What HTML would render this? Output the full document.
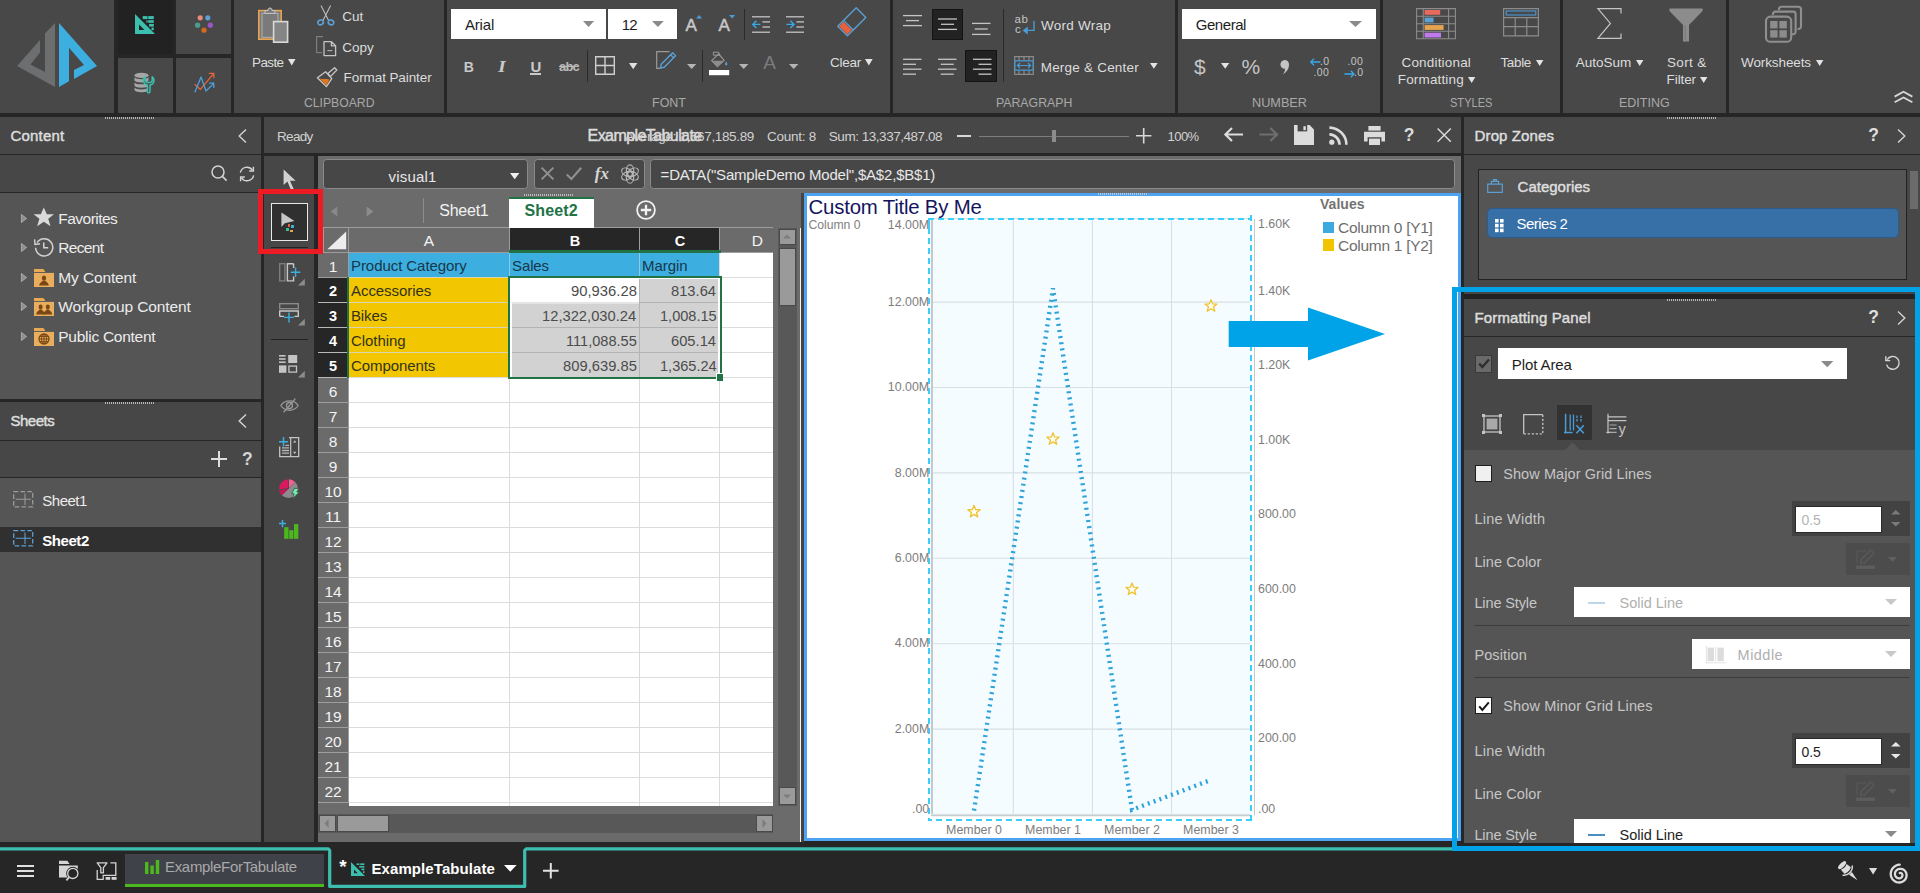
<!DOCTYPE html>
<html><head><meta charset="utf-8"><title>ExampleTabulate</title>
<style>
html,body{margin:0;padding:0;}
body{width:1920px;height:893px;overflow:hidden;background:#262626;font-family:"Liberation Sans",sans-serif;position:relative;}
.r{position:absolute;box-sizing:border-box;display:block;}
.t{position:absolute;white-space:nowrap;line-height:1;}
svg{overflow:visible;}
</style></head><body>

<!-- ribbon1 -->
<div class="r" style="left:0px;top:0px;width:114px;height:113px;background:#484848;"></div><div class="r" style="left:234px;top:0px;width:210px;height:113px;background:#484848;"></div><div class="r" style="left:447px;top:0px;width:443px;height:113px;background:#484848;"></div><div class="r" style="left:893px;top:0px;width:282px;height:113px;background:#484848;"></div><div class="r" style="left:1178px;top:0px;width:202px;height:113px;background:#484848;"></div><div class="r" style="left:1383px;top:0px;width:177px;height:113px;background:#484848;"></div><div class="r" style="left:1563px;top:0px;width:163px;height:113px;background:#484848;"></div><div class="r" style="left:1729px;top:0px;width:191px;height:113px;background:#484848;"></div><div class="r" style="left:118px;top:0px;width:55px;height:54px;background:#222222;"></div><div class="r" style="left:176px;top:0px;width:55px;height:54px;background:#484848;"></div><div class="r" style="left:118px;top:58px;width:55px;height:55px;background:#484848;"></div><div class="r" style="left:176px;top:58px;width:55px;height:55px;background:#484848;"></div><svg class="r" style="left:0px;top:0px;" width="114" height="113" viewBox="0 0 114 113"><path d="M17 66L40 40V52.5L30.5 64.5L45 72V33.5L55 23V87Z" fill="#6d6e70"/><path d="M59 23L97 66L74 79V70L84 65L69 47.7V81.3L59 87Z" fill="#3daee0"/></svg><svg class="r" style="left:135px;top:14px;" width="20" height="20" viewBox="0 0 20 20"><path d="M0 0L20 20H0Z M4 10.5V16H9.5Z" fill="#3cbfae" fill-rule="evenodd"/><g fill="#3cbfae"><rect x="7.700" y="2.100" width="4.800" height="3"/><rect x="13.200" y="2.100" width="5.600" height="3"/><rect x="11.400" y="6.200" width="1.100" height="2.600"/><rect x="13.200" y="6.200" width="5.600" height="2.600"/><rect x="14.100" y="9.900" width="4.700" height="2.700"/><rect x="16.500" y="13.600" width="2.300" height="2.600"/></g></svg><svg class="r" style="left:194px;top:14px;" width="20" height="20" viewBox="0 0 20 20"><circle cx="6.2" cy="3.8" r="2.6" fill="#e98a7a"/><circle cx="13.8" cy="3.8" r="2.6" fill="#5b9fd3"/><circle cx="3.6" cy="11.2" r="2.6" fill="#4a9d8c"/><circle cx="16.3" cy="11.2" r="2.6" fill="#9a55c9"/><circle cx="10" cy="16.2" r="2.6" fill="#d2691e"/></svg><svg class="r" style="left:134px;top:72px;" width="22" height="22" viewBox="0 0 22 22"><g fill="#a6a6a6"><ellipse cx="7.5" cy="3.4" rx="7" ry="2.6"/><path d="M.5 5.2c1 2.6 13 2.6 14 0V8.6c-1 2.6-13 2.6-14 0Z"/><path d="M.5 10.4c1 2.6 13 2.6 14 0V13.8c-1 2.6-13 2.6-14 0Z"/><path d="M.5 15.6c1 2.6 13 2.6 14 0V18c-1 3-13 3-14 0Z"/></g><path d="M11.2 4.8a4.6 4.6 0 0 0 2.2 8.2V19.6a1.3 1.3 0 0 0 2.6 0V13a4.6 4.6 0 0 0 2.2-8.2V9l-1.6 1.4h-3.8L11.200 9Z" fill="#484848" stroke="#3cbfae" stroke-width="1.5" stroke-linejoin="round"/></svg><svg class="r" style="left:194px;top:72px;" width="22" height="22" viewBox="0 0 22 22"><g fill="none" stroke-width="1.3" stroke-linejoin="round" stroke-linecap="round"><path d="M1 12.6L6.4 17.4L19.6 1.6M15.4 1.4H19.8V5.8" stroke="#e8643c"/><path d="M1 20L7 5L12 19L19.6 11.6M15.6 11.2H19.8V15.400" stroke="#4f9fd8"/></g></svg><svg class="r" style="left:258px;top:7px;" width="31" height="37" viewBox="0 0 31 37"><rect x=".8" y="3.6" width="22.4" height="28.6" fill="#7a7a7a" stroke="#e7a44f" stroke-width="1.6"/><rect x="4" y="6.4" width="16" height="24" fill="#7a7a7a" stroke="#a9a9a9" stroke-width="1.2"/><path d="M7 6.4V3.6H10V2.200Q12 -.6 14 2.200V3.6H17V6.400Z" fill="#7a7a7a" stroke="#c8c8c8" stroke-width="1"/><rect x="15.6" y="14.6" width="14" height="20.6" fill="#858585" stroke="#d9d9d9" stroke-width="1.6"/></svg><span class="t" style="letter-spacing:-0.606px;top:55.91px;font-size:13.5px;color:#dcdcdc;left:252px;">Paste</span><svg class="r" style="left:287.5px;top:59px;" width="7.5" height="6.5" viewBox="0 0 7.5 6.5"><path d="M0 0H7.5L3.75 6.5Z" fill="#e4e4e4"/></svg><svg class="r" style="left:317px;top:5px;" width="18" height="21" viewBox="0 0 18 21"><g fill="none" stroke="#bdbdbd" stroke-width="1.1"><path d="M4 .5L11.6 15.600M13.6 .500L6 15.600"/></g><g fill="none" stroke="#5b9fd3" stroke-width="1.6"><ellipse cx="3.6" cy="17.4" rx="2.8" ry="2.3" transform="rotate(-25 3.6 17.4)"/><ellipse cx="14" cy="17.400" rx="2.8" ry="2.3" transform="rotate(25 14 17.4)"/></g></svg><span class="t" style="letter-spacing:-0.005px;top:9.61px;font-size:13.5px;color:#dcdcdc;left:342.2px;">Cut</span><svg class="r" style="left:316px;top:36px;" width="21" height="21" viewBox="0 0 21 21"><path d="M7 .6H.6V16.600H6" fill="none" stroke="#7d7d7d" stroke-width="1.2"/><path d="M8 5.6H15.400L19.600 9.800V19.600H8Z M15.400 5.600V9.800H19.600" fill="#484848" stroke="#c4c4c4" stroke-width="1.3" stroke-linejoin="round"/><path d="M11.4 14.600H16.400" stroke="#b5b5b5" stroke-width="1.1"/></svg><span class="t" style="letter-spacing:-0.004px;top:40.61px;font-size:13.5px;color:#dcdcdc;left:342.2px;">Copy</span><svg class="r" style="left:316px;top:67px;" width="22" height="21" viewBox="0 0 22 21"><path d="M1.4 10.800L9.600 4.800L15.800 11.600L10.400 19.600Z" fill="none" stroke="#c8c8c8" stroke-width="1.3" stroke-linejoin="round"/><path d="M11.800 6.400L18.600 .800L20.800 3L14.400 9.600Z" fill="none" stroke="#c8c8c8" stroke-width="1.3" stroke-linejoin="round"/><path d="M3.600 11.600C7 12.400 10 11.800 13.400 12.600L10.300 18.400Z" fill="#e0781e"/></svg><span class="t" style="letter-spacing:-0.092px;top:71.41px;font-size:13.5px;color:#dcdcdc;left:343.6px;">Format Painter</span><span class="t" style="transform:scaleX(0.9382);transform-origin:0 50%;top:96.15px;font-size:13px;color:#a9a9a9;left:304px;">CLIPBOARD</span>
<!-- ribbon2 -->
<div class="r" style="left:451.4px;top:9.4px;width:154.8px;height:30px;background:#ffffff;"></div><div class="r" style="left:607.8px;top:9.4px;width:68.8px;height:30px;background:#ffffff;"></div><span class="t" style="letter-spacing:-0.163px;top:17.17px;font-size:15px;color:#1e1e1e;left:464.9px;">Arial</span><svg class="r" style="left:582.5px;top:21px;" width="11.100000000000023" height="6" viewBox="0 0 11.100000000000023 6"><path d="M0 0H11.100000000000023L5.550000000000011 6Z" fill="#8a8a8a"/></svg><span class="t" style="letter-spacing:-0.844px;top:17.17px;font-size:15px;color:#1e1e1e;left:621.7px;">12</span><svg class="r" style="left:652px;top:21px;" width="11.799999999999955" height="6" viewBox="0 0 11.799999999999955 6"><path d="M0 0H11.799999999999955L5.899999999999977 6Z" fill="#8a8a8a"/></svg><span class="t" style="top:59.76px;font-size:14px;color:#c9c9c9;left:463.8px;font-weight:bold;">B</span><span class="t" style="top:58.78px;font-size:16px;color:#c9c9c9;left:498px;font-weight:bold;font-style:italic;font-family:'Liberation Serif',serif;transform:scaleX(1.25);transform-origin:left;">I</span><span class="t" style="top:59.27px;font-size:15px;color:#c9c9c9;left:530.6px;font-weight:bold;">U</span><div class="r" style="left:530px;top:73px;width:11.4px;height:1.6px;background:#c9c9c9;"></div><span class="t" style="letter-spacing:-0.802px;top:59.85px;font-size:13px;color:#b9b9b9;left:559px;font-weight:bold;text-decoration:line-through;">abc</span><div class="r" style="left:587.2px;top:50px;width:1px;height:32px;background:#2a2a2a;"></div><svg class="r" style="left:594.6px;top:56px;" width="20" height="19" viewBox="0 0 20 19"><path d="M.7 .7H19.300V18.300H.700ZM10 .7V18.300M.7 9.5H19.300" fill="none" stroke="#cfcfcf" stroke-width="1.4"/></svg><svg class="r" style="left:628.8px;top:63px;" width="8.400000000000091" height="6.200000000000003" viewBox="0 0 8.400000000000091 6.200000000000003"><path d="M0 0H8.400000000000091L4.2000000000000455 6.200000000000003Z" fill="#e0e0e0"/></svg><svg class="r" style="left:656px;top:51px;" width="21" height="19" viewBox="0 0 21 19"><path d="M13.600 .700H.700V17.400H4" fill="none" stroke="#9a9a9a" stroke-width="1.2"/><path d="M16.600 1.800L19.600 4.800L8.200 16.200L4.400 17L5.200 13.200Z M14.600 3.800L17.600 6.800" fill="none" stroke="#5b9fd3" stroke-width="1.4" stroke-linejoin="round"/></svg><svg class="r" style="left:686.7px;top:64.2px;" width="9.299999999999955" height="5.0" viewBox="0 0 9.299999999999955 5.0"><path d="M0 0H9.299999999999955L4.649999999999977 5.0Z" fill="#b4b4b4"/></svg><div class="r" style="left:702px;top:50px;width:1px;height:32px;background:#2a2a2a;"></div><svg class="r" style="left:709px;top:51px;" width="21" height="25" viewBox="0 0 21 25"><path d="M4.400 1.200H9.600L11 4.200H4.400Z" fill="none" stroke="#9a9a9a" stroke-width="1"/><path d="M9.600 2.800L15.200 9.400L8.400 15.600L2.600 9.600Z" fill="none" stroke="#9a9a9a" stroke-width="1.1" stroke-linejoin="round"/><path d="M3.400 9.800H14.600L8.400 15.400Z" fill="#8d8d8d"/><path d="M17.200 10.600C18.800 12.800 18.800 14.400 17.200 14.600C15.600 14.400 15.600 12.800 17.200 10.600Z" fill="#5b9fd3"/><rect x="0" y="19" width="20.200" height="5.200" fill="#ffffff"/></svg><svg class="r" style="left:738.9px;top:64.2px;" width="9.399999999999977" height="5.0" viewBox="0 0 9.399999999999977 5.0"><path d="M0 0H9.399999999999977L4.699999999999989 5.0Z" fill="#b4b4b4"/></svg><span class="t" style="top:52.72px;font-size:19px;color:#7c7c7c;left:763.2px;">A</span><svg class="r" style="left:788.9px;top:64.2px;" width="9.399999999999977" height="5.0" viewBox="0 0 9.399999999999977 5.0"><path d="M0 0H9.399999999999977L4.699999999999989 5.0Z" fill="#b4b4b4"/></svg><span class="t" style="top:16.70px;font-size:17px;color:#c9c9c9;left:685.6px;-webkit-text-stroke:.5px #c9c9c9;">A</span><svg class="r" style="left:695.9px;top:15.2px;" width="6.2" height="3.6" viewBox="0 0 6.2 3.6"><path d="M0 3.600L3.100 0L6.200 3.600Z" fill="#4a9bd6"/></svg><span class="t" style="top:16.70px;font-size:17px;color:#c9c9c9;left:718.6px;-webkit-text-stroke:.5px #c9c9c9;">A</span><svg class="r" style="left:728.8px;top:15.2px;" width="6.2" height="3.6" viewBox="0 0 6.2 3.6"><path d="M0 0H6.200L3.100 3.600Z" fill="#4a9bd6"/></svg><div class="r" style="left:744.2px;top:9px;width:1px;height:31px;background:#2a2a2a;"></div><svg class="r" style="left:752px;top:15px;" width="19" height="19" viewBox="0 0 19 19"><rect x="0" y="1.15" width="18" height="1.3" fill="#c4c4c4"/><rect x="10.4" y="6.25" width="7.6" height="1.3" fill="#c4c4c4"/><rect x="10.4" y="11.35" width="7.6" height="1.3" fill="#c4c4c4"/><rect x="0" y="16.55" width="18" height="1.3" fill="#c4c4c4"/><path d="M8.400 9.400H.800M4.400 5.800L.800 9.400L4.400 13" fill="none" stroke="#38a9e8" stroke-width="1.4"/></svg><svg class="r" style="left:786px;top:15px;" width="19" height="19" viewBox="0 0 19 19"><rect x="0" y="1.15" width="18" height="1.3" fill="#c4c4c4"/><rect x="10.4" y="6.25" width="7.6" height="1.3" fill="#c4c4c4"/><rect x="10.4" y="11.35" width="7.6" height="1.3" fill="#c4c4c4"/><rect x="0" y="16.55" width="18" height="1.3" fill="#c4c4c4"/><path d="M.400 9.400H8M4.400 5.800L8 9.400L4.400 13" fill="none" stroke="#38a9e8" stroke-width="1.4"/></svg><svg class="r" style="left:837px;top:7px;" width="30" height="30" viewBox="0 0 30 30"><path d="M19.200 .800L28.800 10.400L10.400 28.800L.800 19.200Z" fill="none" stroke="#5b9fd3" stroke-width="1.4" stroke-linejoin="round"/><path d="M6.600 14.800L14.800 23L10.400 27.400L2.200 19.200Z" fill="#e8603c"/><path d="M6.600 13.400L16.200 23" stroke="#5b9fd3" stroke-width="1.3"/></svg><span class="t" style="letter-spacing:-0.253px;top:55.91px;font-size:13.5px;color:#dcdcdc;left:829.9px;">Clear</span><svg class="r" style="left:864.8px;top:59px;" width="7.7000000000000455" height="6.5" viewBox="0 0 7.7000000000000455 6.5"><path d="M0 0H7.7000000000000455L3.8500000000000227 6.5Z" fill="#e4e4e4"/></svg><span class="t" style="transform:scaleX(0.9607);transform-origin:0 50%;top:96.15px;font-size:13px;color:#a9a9a9;left:652px;">FONT</span><svg class="r" style="left:903.3px;top:0px;" width="19" height="27.6" viewBox="0 0 19 27.6"><rect x="0.0" y="14.95" width="19" height="1.3" fill="#c4c4c4"/><rect x="3.0" y="19.950000000000003" width="13" height="1.3" fill="#c4c4c4"/><rect x="0.0" y="24.950000000000003" width="19" height="1.3" fill="#c4c4c4"/></svg><div class="r" style="left:931.7px;top:9px;width:31.6px;height:31px;background:#222222;border:1px solid #141414;"></div><svg class="r" style="left:938.3px;top:0px;" width="19" height="31.4" viewBox="0 0 19 31.4"><rect x="0.0" y="18.35" width="19" height="1.3" fill="#c4c4c4"/><rect x="3.0" y="23.650000000000002" width="13" height="1.3" fill="#c4c4c4"/><rect x="0.0" y="28.75" width="19" height="1.3" fill="#c4c4c4"/></svg><svg class="r" style="left:971.7px;top:0px;" width="18.5" height="36.4" viewBox="0 0 18.5 36.4"><rect x="0.0" y="22.75" width="18.5" height="1.3" fill="#c4c4c4"/><rect x="2.75" y="28.35" width="13" height="1.3" fill="#c4c4c4"/><rect x="0.0" y="33.75" width="18.5" height="1.3" fill="#c4c4c4"/></svg><div class="r" style="left:1002.5px;top:9px;width:1px;height:73px;background:#2a2a2a;"></div><svg class="r" style="left:902.7px;top:0px;" width="18.5" height="76.2" viewBox="0 0 18.5 76.2"><rect x="0" y="58.65" width="18.5" height="1.3" fill="#c4c4c4"/><rect x="0" y="63.65" width="13" height="1.3" fill="#c4c4c4"/><rect x="0" y="68.55" width="18.5" height="1.3" fill="#c4c4c4"/><rect x="0" y="73.55" width="13" height="1.3" fill="#c4c4c4"/></svg><svg class="r" style="left:937.7px;top:0px;" width="18.5" height="76.2" viewBox="0 0 18.5 76.2"><rect x="0.0" y="58.65" width="18.5" height="1.3" fill="#c4c4c4"/><rect x="2.75" y="63.65" width="13" height="1.3" fill="#c4c4c4"/><rect x="0.0" y="68.55" width="18.5" height="1.3" fill="#c4c4c4"/><rect x="2.75" y="73.55" width="13" height="1.3" fill="#c4c4c4"/></svg><div class="r" style="left:965px;top:50px;width:31.6px;height:32px;background:#222222;border:1px solid #141414;"></div><svg class="r" style="left:972.7px;top:0px;" width="18.5" height="76.2" viewBox="0 0 18.5 76.2"><rect x="0.0" y="58.65" width="18.5" height="1.3" fill="#c4c4c4"/><rect x="5.5" y="63.65" width="13" height="1.3" fill="#c4c4c4"/><rect x="0.0" y="68.55" width="18.5" height="1.3" fill="#c4c4c4"/><rect x="5.5" y="73.55" width="13" height="1.3" fill="#c4c4c4"/></svg><span class="t" style="letter-spacing:0.602px;top:13.98px;font-size:11.5px;color:#c4c4c4;left:1014.6px;">ab</span><span class="t" style="top:24.38px;font-size:11.5px;color:#c4c4c4;left:1015px;">c</span><svg class="r" style="left:1022px;top:21px;" width="13" height="14" viewBox="0 0 13 14"><path d="M12 0V9.400H4" fill="none" stroke="#4a9bd6" stroke-width="1.400"/><path d="M5.800 5.400L.600 9.400L5.800 13.400Z" fill="#4a9bd6"/></svg><span class="t" style="letter-spacing:0.247px;top:19.41px;font-size:13.5px;color:#dcdcdc;left:1041px;">Word Wrap</span><svg class="r" style="left:1014.3px;top:56px;" width="20" height="19" viewBox="0 0 20 19"><path d="M.700 .700H19.300V18.300H.700ZM5 .700V4.800M10 .700V4.800M15 .700V4.800M5 14.200V18.300M10 14.200V18.300M15 14.200V18.300" fill="none" stroke="#8a8a8a" stroke-width="1.200"/><path d="M.700 4.800H19.300M.700 14.200H19.300M.700 4.800V14.200M19.300 4.800V14.200" fill="none" stroke="#4a9bd6" stroke-width="1.200"/><path d="M3.400 9.500H16.600M6 7L3.400 9.500L6 12M14 7L16.600 9.500L14 12" fill="none" stroke="#4a9bd6" stroke-width="1.200"/></svg><span class="t" style="letter-spacing:0.215px;top:60.71px;font-size:13.5px;color:#dcdcdc;left:1040.7px;">Merge &amp; Center</span><svg class="r" style="left:1150px;top:63.3px;" width="7.7000000000000455" height="5.700000000000003" viewBox="0 0 7.7000000000000455 5.700000000000003"><path d="M0 0H7.7000000000000455L3.8500000000000227 5.700000000000003Z" fill="#e4e4e4"/></svg><span class="t" style="transform:scaleX(0.9458);transform-origin:0 50%;top:96.15px;font-size:13px;color:#a9a9a9;left:996px;">PARAGRAPH</span>
<!-- ribbon3 -->
<div class="r" style="left:1182.4px;top:9.3px;width:193.2px;height:30px;background:#ffffff;"></div><span class="t" style="letter-spacing:-0.439px;top:17.17px;font-size:15px;color:#1e1e1e;left:1195.7px;">General</span><svg class="r" style="left:1349.3px;top:21px;" width="13.0" height="6" viewBox="0 0 13.0 6"><path d="M0 0H13.0L6.5 6Z" fill="#8a8a8a"/></svg><span class="t" style="top:56.14px;font-size:21px;color:#c4c4c4;left:1194px;">$</span><svg class="r" style="left:1220.7px;top:63.3px;" width="8.299999999999955" height="5.700000000000003" viewBox="0 0 8.299999999999955 5.700000000000003"><path d="M0 0H8.299999999999955L4.149999999999977 5.700000000000003Z" fill="#e4e4e4"/></svg><span class="t" style="letter-spacing:-0.087px;top:56.34px;font-size:21px;color:#c4c4c4;left:1241.4px;">%</span><svg class="r" style="left:1280px;top:60px;" width="10" height="15" viewBox="0 0 10 15"><path d="M4.600 0A4.400 4.400 0 0 1 9 4.600C9 9 6.400 12.600 2.600 14.400C4.400 12.400 5.200 10.600 5 8.800A4.400 4.400 0 0 1 4.600 0Z" fill="#c4c4c4"/></svg><span class="t" style="letter-spacing:0.417px;top:56.07px;font-size:10.5px;color:#c4c4c4;left:1320px;">.0</span><span class="t" style="letter-spacing:0.330px;top:67.47px;font-size:10.5px;color:#c4c4c4;left:1313.6px;">.00</span><svg class="r" style="left:1310px;top:58.4px;" width="11" height="8" viewBox="0 0 11 8"><path d="M10.400 4H1M4 .800L.800 4L4 7.200" fill="none" stroke="#38a9e8" stroke-width="1.3"/></svg><span class="t" style="letter-spacing:0.330px;top:56.07px;font-size:10.5px;color:#c4c4c4;left:1347.6px;">.00</span><span class="t" style="letter-spacing:0.417px;top:67.47px;font-size:10.5px;color:#c4c4c4;left:1354px;">.0</span><svg class="r" style="left:1344px;top:69.6px;" width="11" height="8" viewBox="0 0 11 8"><path d="M.400 4H9.800M6.800 .800L10 4L6.800 7.200" fill="none" stroke="#38a9e8" stroke-width="1.3"/></svg><span class="t" style="transform:scaleX(0.9762);transform-origin:0 50%;top:96.15px;font-size:13px;color:#a9a9a9;left:1251.7px;">NUMBER</span><svg class="r" style="left:1416px;top:7.6px;" width="40" height="31.4" viewBox="0 0 40 31.4"><path d="M.600 .600H39.400V30.800H.600ZM.600 8.200H39.400M.600 15.700H39.400M.600 23.300H39.400M7.200 .600V30.800M32.600 .600V30.800" fill="none" stroke="#8c8c8c" stroke-width="1.1"/><rect x="8.600" y="2" width="15.600" height="4.800" fill="#e8695e"/><rect x="8.600" y="9.600" width="9" height="4.800" fill="#5b9fd3"/><rect x="8.600" y="17.100" width="19" height="4.800" fill="#e7a44f"/><rect x="8.600" y="24.700" width="16.400" height="4.800" fill="#c07af0"/></svg><span class="t" style="letter-spacing:0.178px;top:55.91px;font-size:13.5px;color:#dcdcdc;left:1401.5px;">Conditional</span><span class="t" style="letter-spacing:0.147px;top:72.81px;font-size:13.5px;color:#dcdcdc;left:1397.8px;">Formatting</span><svg class="r" style="left:1468.3px;top:76.6px;" width="7.2999999999999545" height="6.0" viewBox="0 0 7.2999999999999545 6.0"><path d="M0 0H7.2999999999999545L3.6499999999999773 6.0Z" fill="#e4e4e4"/></svg><svg class="r" style="left:1503px;top:7.6px;" width="36" height="28.4" viewBox="0 0 36 28.4"><path d="M.600 .600H35.400V27.800H.600ZM.600 9.600H35.400M.600 18.700H35.400M12.200 9.600V27.800M23.800 9.600V27.800" fill="none" stroke="#8c8c8c" stroke-width="1.2"/><rect x="3.200" y="3" width="29.600" height="4" fill="none" stroke="#4a9bd6" stroke-width="1.100"/></svg><span class="t" style="letter-spacing:-0.336px;top:55.91px;font-size:13.5px;color:#dcdcdc;left:1500.4px;">Table</span><svg class="r" style="left:1535.6px;top:59.6px;" width="7.400000000000091" height="5.999999999999993" viewBox="0 0 7.400000000000091 5.999999999999993"><path d="M0 0H7.400000000000091L3.7000000000000455 5.999999999999993Z" fill="#e4e4e4"/></svg><span class="t" style="transform:scaleX(0.8504);transform-origin:0 50%;top:96.15px;font-size:13px;color:#a9a9a9;left:1450px;">STYLES</span><svg class="r" style="left:1597px;top:7.6px;" width="25" height="31" viewBox="0 0 25 31"><path d="M24 5.600V.600H.900L13.400 15.400L.900 30.400H24V25.400" fill="none" stroke="#c4c4c4" stroke-width="1.200"/></svg><span class="t" style="letter-spacing:0.010px;top:55.91px;font-size:13.5px;color:#dcdcdc;left:1575.7px;">AutoSum</span><svg class="r" style="left:1636px;top:59.6px;" width="7.400000000000091" height="5.999999999999993" viewBox="0 0 7.400000000000091 5.999999999999993"><path d="M0 0H7.400000000000091L3.7000000000000455 5.999999999999993Z" fill="#e4e4e4"/></svg><svg class="r" style="left:1669px;top:7.6px;" width="34" height="34" viewBox="0 0 34 34"><path d="M.400 .400H33.600V3L20 17V33.400H14V17L.400 3Z" fill="#8c8c8c"/><path d="M16.200 17V32" stroke="#777" stroke-width="1"/></svg><span class="t" style="letter-spacing:0.364px;top:55.91px;font-size:13.5px;color:#dcdcdc;left:1667px;">Sort &amp;</span><span class="t" style="letter-spacing:-0.100px;top:72.81px;font-size:13.5px;color:#dcdcdc;left:1666.6px;">Filter</span><svg class="r" style="left:1700px;top:76.6px;" width="7.400000000000091" height="6.0" viewBox="0 0 7.400000000000091 6.0"><path d="M0 0H7.400000000000091L3.7000000000000455 6.0Z" fill="#e4e4e4"/></svg><span class="t" style="transform:scaleX(0.9614);transform-origin:0 50%;top:96.15px;font-size:13px;color:#a9a9a9;left:1619.3px;">EDITING</span><svg class="r" style="left:1764.8px;top:6.3px;" width="37" height="37" viewBox="0 0 37 37"><g fill="none" stroke="#8f8f8f" stroke-width="2.100"><path d="M14 4V3A2.400 2.400 0 0 1 16.400 .800H33.600A2.400 2.400 0 0 1 36 3.200V20.600A2.400 2.400 0 0 1 33.600 23H32.600"/><path d="M8 9V8A2.400 2.400 0 0 1 10.400 5.600H28.200A2.400 2.400 0 0 1 30.600 8V25.800A2.400 2.400 0 0 1 28.200 28.200H27"/><rect x="1" y="10.600" width="25.200" height="25.200" rx="4.400"/></g><g fill="#8c8c8c"><rect x="5.200" y="15" width="7.400" height="7.400"/><rect x="14.400" y="15" width="7.400" height="7.400"/><rect x="5.200" y="24.200" width="7.400" height="7.400"/><rect x="14.400" y="24.200" width="7.400" height="7.400"/></g></svg><span class="t" style="letter-spacing:-0.103px;top:55.91px;font-size:13.5px;color:#dcdcdc;left:1741px;">Worksheets</span><svg class="r" style="left:1815.6px;top:59.6px;" width="7.400000000000091" height="5.999999999999993" viewBox="0 0 7.400000000000091 5.999999999999993"><path d="M0 0H7.400000000000091L3.7000000000000455 5.999999999999993Z" fill="#e4e4e4"/></svg><svg class="r" style="left:1894.4px;top:91px;" width="19" height="12" viewBox="0 0 19 12"><path d="M.600 5.600L9.500 .800L18.400 5.600M.600 11.200L9.500 6.400L18.400 11.200" fill="none" stroke="#d8d8d8" stroke-width="1.800"/></svg>
<!-- left -->
<div class="r" style="left:0px;top:117px;width:261px;height:37px;background:#474747;"></div><span class="t" style="letter-spacing:0.208px;top:127.67px;font-size:15px;color:#dedede;left:10.4px;-webkit-text-stroke:.45px;">Content</span><svg class="r" style="left:237.7px;top:129px;" width="9" height="14" viewBox="0 0 9 14"><path d="M8 .600L1.200 7L8 13.400" fill="none" stroke="#d4d4d4" stroke-width="1.400"/></svg><div class="r" style="left:0px;top:155px;width:261px;height:37px;background:#474747;"></div><svg class="r" style="left:211px;top:165.4px;" width="17" height="17" viewBox="0 0 17 17"><circle cx="7" cy="7" r="6" fill="none" stroke="#d4d4d4" stroke-width="1.500"/><path d="M11.400 11.400L15.600 15.600" stroke="#d4d4d4" stroke-width="1.600"/></svg><svg class="r" style="left:239.2px;top:165.6px;" width="16" height="16" viewBox="0 0 16 16"><path d="M1.400 6.600A6.600 6.600 0 0 1 13.400 4.200M14.600 9.400A6.600 6.600 0 0 1 2.600 11.800" fill="none" stroke="#d4d4d4" stroke-width="1.400"/><path d="M14.400 .800V5H10.200M1.600 15.200V11H5.800" fill="none" stroke="#d4d4d4" stroke-width="1.400"/></svg><div class="r" style="left:0px;top:193px;width:261px;height:206px;background:#555555;"></div><svg class="r" style="left:20.8px;top:214.2px;" width="6" height="9" viewBox="0 0 6 9"><path d="M.400 .400L5.600 4.500L.400 8.600Z" fill="#8f8f8f" stroke="#bdbdbd" stroke-width=".7"/></svg><span class="t" style="letter-spacing:-0.528px;top:211.03px;font-size:15.5px;color:#ececec;left:58.3px;">Favorites</span><svg class="r" style="left:20.8px;top:243.4px;" width="6" height="9" viewBox="0 0 6 9"><path d="M.400 .400L5.600 4.500L.400 8.600Z" fill="#8f8f8f" stroke="#bdbdbd" stroke-width=".7"/></svg><span class="t" style="letter-spacing:-0.688px;top:240.23px;font-size:15.5px;color:#ececec;left:58.3px;">Recent</span><svg class="r" style="left:20.8px;top:273.20000000000005px;" width="6" height="9" viewBox="0 0 6 9"><path d="M.400 .400L5.600 4.500L.400 8.600Z" fill="#8f8f8f" stroke="#bdbdbd" stroke-width=".7"/></svg><span class="t" style="letter-spacing:-0.127px;top:270.03px;font-size:15.5px;color:#ececec;left:58.3px;">My Content</span><svg class="r" style="left:20.8px;top:302.40000000000003px;" width="6" height="9" viewBox="0 0 6 9"><path d="M.400 .400L5.600 4.500L.400 8.600Z" fill="#8f8f8f" stroke="#bdbdbd" stroke-width=".7"/></svg><span class="t" style="letter-spacing:-0.096px;top:299.23px;font-size:15.5px;color:#ececec;left:58.3px;">Workgroup Content</span><svg class="r" style="left:20.8px;top:331.8px;" width="6" height="9" viewBox="0 0 6 9"><path d="M.400 .400L5.600 4.500L.400 8.600Z" fill="#8f8f8f" stroke="#bdbdbd" stroke-width=".7"/></svg><span class="t" style="letter-spacing:-0.272px;top:328.63px;font-size:15.5px;color:#ececec;left:58.3px;">Public Content</span><svg class="r" style="left:33.4px;top:207.4px;" width="21" height="20" viewBox="0 0 21 20"><path d="M10.500 .400L13.400 7H20.400L14.800 11.400L17 18.800L10.500 14.400L4 18.800L6.200 11.400L.600 7H7.600Z" fill="#d9d9d9" transform="scale(1.03)"/></svg><svg class="r" style="left:34px;top:237.4px;" width="20" height="20" viewBox="0 0 20 20"><path d="M3 5.600A8.600 8.600 0 1 1 1.600 10.800" fill="none" stroke="#d4d4d4" stroke-width="1.500"/><path d="M.600 2.400L1 7.400L6 6.800" fill="none" stroke="#d4d4d4" stroke-width="1.400"/><path d="M9.800 5.400V10.800H14.200" fill="none" stroke="#d4d4d4" stroke-width="1.500"/></svg><svg class="r" style="left:34px;top:269.2px;" width="20" height="18" viewBox="0 0 20 18"><path d="M0 0H9.400L11.400 2.900H0Z" fill="#e8a955"/><path d="M0 3.900H20V18H0Z" fill="#e9ad5e"/><g transform="translate(10 0)" fill="#7a4814"><ellipse cx="0" cy="9" rx="2.2" ry="2.6"/><path d="M-4.8 16.400C-4.6 13.400 -2.0 13 -1.2 11.400H1.2C2.0 13 4.6 13.400 4.8 16.400Z"/></g></svg><svg class="r" style="left:34px;top:298.3px;" width="20" height="18" viewBox="0 0 20 18"><path d="M0 0H9.400L11.400 2.900H0Z" fill="#e8a955"/><path d="M0 3.900H20V18H0Z" fill="#e9ad5e"/><g transform="translate(6.6 0)" fill="#7a4814"><ellipse cx="0" cy="9" rx="2.0240000000000005" ry="2.3920000000000003"/><path d="M-4.416 16.400C-4.232 13.400 -1.84 13 -1.104 11.400H1.104C1.84 13 4.232 13.400 4.416 16.400Z"/></g><g transform="translate(13.8 0)" fill="#7a4814"><ellipse cx="0" cy="9" rx="2.0240000000000005" ry="2.3920000000000003"/><path d="M-4.416 16.400C-4.232 13.400 -1.84 13 -1.104 11.400H1.104C1.84 13 4.232 13.400 4.416 16.400Z"/></g></svg><svg class="r" style="left:34px;top:328.2px;" width="20" height="18" viewBox="0 0 20 18"><path d="M0 0H9.400L11.400 2.900H0Z" fill="#e8a955"/><path d="M0 3.900H20V18H0Z" fill="#e9ad5e"/><circle cx="10" cy="11" r="5" fill="none" stroke="#7a4814" stroke-width="1.300"/><path d="M5 11H15M5.800 8.400H14.200M5.800 13.600H14.200M10 6V16M10 6C6.600 9 6.600 13 10 16C13.400 13 13.400 9 10 6" fill="none" stroke="#7a4814" stroke-width="1"/></svg><div class="r" style="left:0px;top:402px;width:261px;height:38px;background:#474747;"></div><span class="t" style="letter-spacing:-0.451px;top:412.87px;font-size:15px;color:#dedede;left:10.4px;-webkit-text-stroke:.45px;">Sheets</span><svg class="r" style="left:237.7px;top:414px;" width="9" height="14" viewBox="0 0 9 14"><path d="M8 .600L1.200 7L8 13.400" fill="none" stroke="#d4d4d4" stroke-width="1.400"/></svg><div class="r" style="left:0px;top:441px;width:261px;height:36px;background:#474747;"></div><svg class="r" style="left:211px;top:451.4px;" width="16" height="16" viewBox="0 0 16 16"><path d="M8 0V16M0 8H16" stroke="#dedede" stroke-width="2"/></svg><span class="t" style="top:451.25px;font-size:17.5px;color:#d4d4d4;left:242px;font-weight:bold;">?</span><div class="r" style="left:0px;top:478px;width:261px;height:364px;background:#555555;"></div><div class="r" style="left:0px;top:527px;width:261px;height:25px;background:#303030;"></div><svg class="r" style="left:12.8px;top:490.6px;" width="21" height="17" viewBox="0 0 21 17"><rect x=".700" y=".700" width="19" height="15.200" fill="none" stroke="#9a9a9a" stroke-width="1.300" stroke-dasharray="4.600 2.200"/><path d="M12 2.600V14M2.600 8.300H18" stroke="#9a9a9a" stroke-width="1.100"/></svg><span class="t" style="letter-spacing:-0.491px;top:492.97px;font-size:15px;color:#ececec;left:42.3px;">Sheet1</span><svg class="r" style="left:12.8px;top:530.4px;" width="21" height="17" viewBox="0 0 21 17"><rect x=".700" y=".700" width="19" height="15.200" fill="none" stroke="#5b9fd3" stroke-width="1.300" stroke-dasharray="4.600 2.200"/><path d="M12 2.600V14M2.600 8.300H18" stroke="#5b9fd3" stroke-width="1.100"/></svg><span class="t" style="letter-spacing:-0.451px;top:532.87px;font-size:15px;color:#ffffff;left:42.3px;font-weight:bold;">Sheet2</span>
<!-- toolbar -->
<div class="r" style="left:264px;top:156px;width:50px;height:686px;background:#474747;"></div><svg class="r" style="left:283px;top:169px;" width="14" height="23" viewBox="0 0 14 23"><path d="M.600 .600V16L4.400 12.600L8.200 21.400L10.800 20.200L7 11.800H12.600Z" fill="#d2d2d2"/></svg><div class="r" style="left:271px;top:203px;width:37.4px;height:38.4px;background:#303030;border:1px solid #e8e8e8;"></div><svg class="r" style="left:281px;top:212px;" width="14" height="16" viewBox="0 0 14 16"><path d="M.400 .400V15L3.800 11.200L13.400 9Z" fill="#c8c8c8"/></svg><div class="r" style="left:287.6px;top:224px;width:2.6px;height:2.6px;background:#e8603c;"></div><div class="r" style="left:291.4px;top:225.4px;width:2.6px;height:2.6px;background:#3daee0;"></div><div class="r" style="left:286.2px;top:228.2px;width:2.6px;height:2.6px;background:#3cbf8e;"></div><div class="r" style="left:290px;top:229.6px;width:2.6px;height:2.6px;background:#e7a44f;"></div><div class="r" style="left:271px;top:246.6px;width:37.4px;height:1.2px;background:#222;"></div><svg class="r" style="left:278.6px;top:263.4px;" width="26" height="23" viewBox="0 0 26 23"><g fill="none" stroke-width="1.400"><rect x=".700" y=".700" width="5.200" height="17.200" stroke="#7d7d7d"/><path d="M14.600 .700H8.400V17.900H14.600V13.600M14.600 .700V5" stroke="#c8c8c8"/></g><path d="M16.600 4.400V14M11.800 9.200H21.400" stroke="#3daee0" stroke-width="1.400"/><path d="M25.800 15.800V22.600H19Z" fill="#8c8c8c"/></svg><svg class="r" style="left:278.6px;top:303px;" width="26" height="23" viewBox="0 0 26 23"><g fill="none" stroke-width="1.400"><rect x=".700" y=".700" width="18.600" height="5" stroke="#8a8a8a"/><path d="M.700 13.400V8H19.300V13.400H15.400M.700 13.400H5" stroke="#c8c8c8"/></g><path d="M10 9.400V19.400M5 14.400H15" stroke="#3daee0" stroke-width="1.400"/><path d="M25.800 15.800V22.600H19Z" fill="#8c8c8c"/></svg><div class="r" style="left:271px;top:338.8px;width:37.4px;height:1.2px;background:#222;"></div><svg class="r" style="left:278.6px;top:355px;" width="26" height="23" viewBox="0 0 26 23"><g fill="#c4c4c4"><rect x="0" y="0" width="6.600" height="1.600"/><rect x="0" y="3.200" width="6.600" height="1.600"/><rect x="0" y="6.400" width="6.600" height="1.600"/><rect x="9.200" y="0" width="9" height="8"/><rect x="0" y="10.400" width="7.400" height="7.400"/></g><rect x="9.900" y="11.100" width="7.600" height="6" fill="none" stroke="#c4c4c4" stroke-width="1.300"/><path d="M25.800 15.800V22.600H19Z" fill="#8c8c8c"/></svg><svg class="r" style="left:280px;top:398px;" width="19" height="15" viewBox="0 0 19 15"><path d="M.800 7.500C5 1.200 14 1.200 18.200 7.500C14 13.800 5 13.800 .800 7.500Z" fill="none" stroke="#9a9a9a" stroke-width="1.300"/><circle cx="9.500" cy="7.500" r="3" fill="none" stroke="#9a9a9a" stroke-width="1.300"/><path d="M3.600 14.400L15.400 .600" stroke="#9a9a9a" stroke-width="1.400"/></svg><svg class="r" style="left:279px;top:436.8px;" width="21" height="21" viewBox="0 0 21 21"><path d="M10 .700H19.700V19.700H.700V9.600" fill="none" stroke="#c4c4c4" stroke-width="1.300"/><path d="M11.700 .700V19.700" stroke="#c4c4c4" stroke-width="1.200"/><path d="M6.400 8.300H10M3 10.900H10M3 13.500H10M3 16.100H10" stroke="#b4b4b4" stroke-width="1.300"/><path d="M14 5.400L15.700 3.200L17.400 5.400ZM14 14.800L15.700 17L17.400 14.800Z" fill="#c4c4c4"/><path d="M4.500 0V9.400M0 4.700H9" stroke="#3daee0" stroke-width="1.500"/></svg><svg class="r" style="left:279px;top:479px;" width="21" height="21" viewBox="0 0 21 21"><path d="M16.150 2.950A9.400 9.400 0 0 1 2.850 16.250Z" fill="#8c8c8c"/><path d="M2.850 16.250A9.400 9.400 0 0 1 16.150 2.950Z" fill="#d81b60"/><path d="M9.500 9.600V.200A9.400 9.400 0 0 1 16.150 2.950Z" fill="#f06292"/><path d="M9.500 9.600L.200 10.800A9.400 9.400 0 0 0 2.850 16.250Z" fill="#c2185b"/><path d="M9.500 9.600V.200M9.500 9.600L.200 10.800" stroke="#474747" stroke-width=".9"/><path d="M15.400 9.400H20L17.800 13H20.400L13.400 20L15.200 14.800H12.600Z" fill="#69f0ae" stroke="#474747" stroke-width=".8"/></svg><svg class="r" style="left:279px;top:520px;" width="21" height="20" viewBox="0 0 21 20"><g fill="#4cb81d"><rect x="5.200" y="7.200" width="4.300" height="11.600"/><rect x="10.200" y="10.200" width="4.200" height="8.600"/><rect x="15" y="4.100" width="4.300" height="14.700"/></g><path d="M3.500 0V7.200M0 3.600H7" stroke="#3daee0" stroke-width="1.500"/></svg>
<!-- sheet -->
<div class="r" style="left:264px;top:117px;width:1197px;height:36px;background:#474747;"></div><span class="t" style="letter-spacing:-0.666px;top:130.01px;font-size:13.5px;color:#d2d2d2;left:277px;">Ready</span><span class="t" style="letter-spacing:-0.583px;top:127.98px;font-size:16px;color:#dcdcdc;left:587.6px;-webkit-text-stroke:.45px;">ExampleTabulate</span><span class="t" style="letter-spacing:-0.351px;top:129.81px;font-size:13.5px;color:#d2d2d2;left:625px;">Average: 1,667,185.89</span><span class="t" style="letter-spacing:-0.256px;top:129.81px;font-size:13.5px;color:#d2d2d2;left:767px;">Count: 8</span><span class="t" style="letter-spacing:-0.466px;top:129.81px;font-size:13.5px;color:#d2d2d2;left:828.8px;">Sum: 13,337,487.08</span><div class="r" style="left:956.7px;top:135.4px;width:14.3px;height:1.6px;background:#d8d8d8;"></div><div class="r" style="left:979px;top:135.6px;width:150px;height:1px;background:#7d7d7d;"></div><div class="r" style="left:1052.4px;top:130px;width:3.2px;height:12.4px;background:#8c8c8c;"></div><svg class="r" style="left:1136.4px;top:128.4px;" width="15.4" height="15.4" viewBox="0 0 15.4 15.4"><path d="M7.700 0V15.400M0 7.700H15.400" stroke="#d8d8d8" stroke-width="1.600"/></svg><span class="t" style="letter-spacing:-0.562px;top:130.05px;font-size:13px;color:#d2d2d2;left:1167.6px;">100%</span><svg class="r" style="left:1223.6px;top:127.3px;" width="19.4" height="15" viewBox="0 0 19.4 15"><path d="M19 7.500H1.600M8 1L1.400 7.500L8 14" fill="none" stroke="#dedede" stroke-width="2.200"/></svg><svg class="r" style="left:1258.6px;top:127.3px;" width="19.4" height="15" viewBox="0 0 19.4 15"><path d="M.400 7.500H17.800M11.400 1L18 7.500L11.400 14" fill="none" stroke="#6e6e6e" stroke-width="2.200"/></svg><svg class="r" style="left:1294px;top:125.2px;" width="20" height="20" viewBox="0 0 20 20"><path d="M0 0H15.600L20 4.400V20H0Z" fill="#dcdcdc"/><rect x="3.600" y="0" width="9.600" height="6.400" fill="#474747"/><rect x="9.400" y="1.200" width="2.400" height="4" fill="#dcdcdc"/><rect x="3" y="10.400" width="14" height="9.600" fill="#dcdcdc"/></svg><svg class="r" style="left:1329px;top:125.6px;" width="19" height="19" viewBox="0 0 19 19"><circle cx="2.800" cy="16.200" r="2.600" fill="#dcdcdc"/><path d="M.400 8.400A10.400 10.400 0 0 1 10.600 18.800M.400 1.600A17.200 17.200 0 0 1 17.400 18.800" fill="none" stroke="#dcdcdc" stroke-width="2.600"/></svg><svg class="r" style="left:1363.5px;top:125.8px;" width="21" height="19" viewBox="0 0 21 19"><rect x="4.400" y="0" width="12.200" height="4.600" fill="#dcdcdc"/><path d="M0 5.800H21V15.400H17.400V11.200H3.600V15.400H0Z" fill="#dcdcdc"/><rect x="5" y="12.600" width="11" height="6.400" fill="#dcdcdc"/></svg><span class="t" style="top:127.25px;font-size:17.5px;color:#dcdcdc;left:1403.8px;font-weight:bold;">?</span><svg class="r" style="left:1436.8px;top:128.2px;" width="14.4" height="14.4" viewBox="0 0 14.4 14.4"><path d="M.600 .600L13.800 13.800M13.800 .600L.600 13.800" stroke="#dcdcdc" stroke-width="1.400"/></svg><div class="r" style="left:318px;top:156px;width:483px;height:686px;background:#6b6b6b;"></div><div class="r" style="left:801px;top:193px;width:3px;height:649px;background:#444444;"></div><div class="r" style="left:801px;top:156px;width:660px;height:37px;background:#6b6b6b;"></div><div class="r" style="left:323px;top:159px;width:205px;height:29.6px;background:#474747;border:1px solid #8a8a8a;border-radius:3.500px;"></div><span class="t" style="letter-spacing:0.185px;top:168.87px;font-size:15px;color:#e8e8e8;left:412.6px;transform:translateX(-50%);">visual1</span><svg class="r" style="left:510px;top:172.6px;" width="9.399999999999977" height="6.200000000000017" viewBox="0 0 9.399999999999977 6.200000000000017"><path d="M0 0H9.399999999999977L4.699999999999989 6.200000000000017Z" fill="#f0f0f0"/></svg><div class="r" style="left:533.5px;top:159px;width:111.5px;height:29.6px;background:#474747;border:1px solid #8a8a8a;border-radius:3.500px;"></div><svg class="r" style="left:541.4px;top:167.4px;" width="13" height="13" viewBox="0 0 13 13"><path d="M.600 .600L12.400 12.400M12.400 .600L.600 12.400" stroke="#909090" stroke-width="2"/></svg><svg class="r" style="left:566.4px;top:167.4px;" width="16" height="13" viewBox="0 0 16 13"><path d="M.800 7.400L5.400 12L15.200 .800" fill="none" stroke="#909090" stroke-width="2.100"/></svg><span class="t" style="top:165.10px;font-size:17px;color:#d6d6d6;left:594.8px;font-weight:bold;font-style:italic;font-family:'Liberation Serif',serif;">fx</span><svg class="r" style="left:620px;top:163.6px;" width="20" height="20" viewBox="0 0 20 20"><ellipse cx="10" cy="6.600" rx="3.700" ry="5.800" transform="rotate(0 10 10)" fill="none" stroke="#b8b8b8" stroke-width="1.150"/><ellipse cx="10" cy="6.600" rx="3.700" ry="5.800" transform="rotate(60 10 10)" fill="none" stroke="#b8b8b8" stroke-width="1.150"/><ellipse cx="10" cy="6.600" rx="3.700" ry="5.800" transform="rotate(120 10 10)" fill="none" stroke="#b8b8b8" stroke-width="1.150"/><ellipse cx="10" cy="6.600" rx="3.700" ry="5.800" transform="rotate(180 10 10)" fill="none" stroke="#b8b8b8" stroke-width="1.150"/><ellipse cx="10" cy="6.600" rx="3.700" ry="5.800" transform="rotate(240 10 10)" fill="none" stroke="#b8b8b8" stroke-width="1.150"/><ellipse cx="10" cy="6.600" rx="3.700" ry="5.800" transform="rotate(300 10 10)" fill="none" stroke="#b8b8b8" stroke-width="1.150"/></svg><div class="r" style="left:650.4px;top:159px;width:805px;height:29.6px;background:#474747;border:1px solid #8a8a8a;border-radius:3.500px;"></div><span class="t" style="letter-spacing:-0.197px;top:166.87px;font-size:15px;color:#e8e8e8;left:660.6px;">=DATA("SampleDemo Model",$A$2,$B$1)</span><svg class="r" style="left:330px;top:205.6px;" width="8" height="11" viewBox="0 0 8 11"><path d="M7.400 .400V10.600L.600 5.500Z" fill="#888888"/></svg><svg class="r" style="left:366.4px;top:205.6px;" width="8" height="11" viewBox="0 0 8 11"><path d="M.600 .400V10.600L7.400 5.500Z" fill="#8c8c8c"/></svg><div class="r" style="left:423px;top:198px;width:1.2px;height:25.4px;background:#8d8d8d;"></div><span class="t" style="letter-spacing:-0.253px;top:202.58px;font-size:16px;color:#f2f2f2;left:439.3px;">Sheet1</span><div class="r" style="left:318px;top:227px;width:455px;height:1.2px;background:#9d9d9d;"></div><div class="r" style="left:508.6px;top:196.8px;width:85px;height:31.6px;background:#ffffff;border-top:2.400px solid #217346;"></div><span class="t" style="letter-spacing:0.155px;top:202.58px;font-size:16px;color:#217346;left:524.4px;font-weight:bold;">Sheet2</span><svg class="r" style="left:635.6px;top:200.4px;" width="20" height="20" viewBox="0 0 20 20"><circle cx="10" cy="10" r="8.900" fill="none" stroke="#f2f2f2" stroke-width="1.800"/><path d="M10 4.800V15.200M4.800 10H15.200" stroke="#f2f2f2" stroke-width="2.300"/></svg><div class="r" style="left:349px;top:253px;width:424px;height:553px;background:#ffffff;"></div><span class="t" style="top:233.43px;font-size:15.5px;color:#f4f4f4;left:429.0px;transform:translateX(-50%);">A</span><div class="r" style="left:509px;top:228.2px;width:131px;height:24px;background:#262626;"></div><span class="t" style="top:233.92px;font-size:14.5px;color:#ffffff;left:575.0px;transform:translateX(-50%);font-weight:bold;">B</span><div class="r" style="left:639px;top:228.2px;width:81px;height:24px;background:#262626;"></div><span class="t" style="top:233.92px;font-size:14.5px;color:#ffffff;left:680.0px;transform:translateX(-50%);font-weight:bold;">C</span><span class="t" style="top:233.43px;font-size:15.5px;color:#f4f4f4;left:757.4px;transform:translateX(-50%);">D</span><div class="r" style="left:348px;top:228.2px;width:1.2px;height:24.4px;background:#9d9d9d;"></div><div class="r" style="left:509px;top:228.2px;width:1.2px;height:24.4px;background:#9d9d9d;"></div><div class="r" style="left:639px;top:228.2px;width:1.2px;height:24.4px;background:#9d9d9d;"></div><div class="r" style="left:719px;top:228.2px;width:1.2px;height:24.4px;background:#9d9d9d;"></div><div class="r" style="left:509px;top:250.2px;width:212px;height:2.8px;background:#217346;"></div><div class="r" style="left:318px;top:252px;width:191px;height:1.2px;background:#9d9d9d;"></div><div class="r" style="left:721px;top:252px;width:52px;height:1.2px;background:#9d9d9d;"></div><svg class="r" style="left:326px;top:231px;" width="21" height="19" viewBox="0 0 21 19"><path d="M20.200 .400V18.200H1.400Z" fill="#ededed"/></svg><div class="r" style="left:323px;top:228.2px;width:1px;height:24px;background:#9d9d9d;"></div><span class="t" style="top:258.63px;font-size:15.5px;color:#f4f4f4;left:333px;transform:translateX(-50%);">1</span><div class="r" style="left:318px;top:277px;width:31px;height:1.2px;background:#9d9d9d;"></div><div class="r" style="left:318px;top:278px;width:30px;height:24.4px;background:#262626;"></div><span class="t" style="top:284.12px;font-size:14.5px;color:#ffffff;left:333px;transform:translateX(-50%);font-weight:bold;">2</span><div class="r" style="left:318px;top:302px;width:31px;height:1.2px;background:#b8b8b8;"></div><div class="r" style="left:318px;top:303px;width:30px;height:24.4px;background:#262626;"></div><span class="t" style="top:309.12px;font-size:14.5px;color:#ffffff;left:333px;transform:translateX(-50%);font-weight:bold;">3</span><div class="r" style="left:318px;top:327px;width:31px;height:1.2px;background:#b8b8b8;"></div><div class="r" style="left:318px;top:328px;width:30px;height:24.4px;background:#262626;"></div><span class="t" style="top:334.12px;font-size:14.5px;color:#ffffff;left:333px;transform:translateX(-50%);font-weight:bold;">4</span><div class="r" style="left:318px;top:352px;width:31px;height:1.2px;background:#b8b8b8;"></div><div class="r" style="left:318px;top:353px;width:30px;height:24.4px;background:#262626;"></div><span class="t" style="top:359.12px;font-size:14.5px;color:#ffffff;left:333px;transform:translateX(-50%);font-weight:bold;">5</span><div class="r" style="left:318px;top:377px;width:31px;height:1.2px;background:#b8b8b8;"></div><span class="t" style="top:383.63px;font-size:15.5px;color:#f4f4f4;left:333px;transform:translateX(-50%);">6</span><div class="r" style="left:318px;top:402px;width:31px;height:1.2px;background:#9d9d9d;"></div><span class="t" style="top:408.63px;font-size:15.5px;color:#f4f4f4;left:333px;transform:translateX(-50%);">7</span><div class="r" style="left:318px;top:427px;width:31px;height:1.2px;background:#9d9d9d;"></div><span class="t" style="top:433.63px;font-size:15.5px;color:#f4f4f4;left:333px;transform:translateX(-50%);">8</span><div class="r" style="left:318px;top:452px;width:31px;height:1.2px;background:#9d9d9d;"></div><span class="t" style="top:458.63px;font-size:15.5px;color:#f4f4f4;left:333px;transform:translateX(-50%);">9</span><div class="r" style="left:318px;top:477px;width:31px;height:1.2px;background:#9d9d9d;"></div><span class="t" style="top:483.63px;font-size:15.5px;color:#f4f4f4;left:333px;transform:translateX(-50%);">10</span><div class="r" style="left:318px;top:502px;width:31px;height:1.2px;background:#9d9d9d;"></div><span class="t" style="top:508.63px;font-size:15.5px;color:#f4f4f4;left:333px;transform:translateX(-50%);">11</span><div class="r" style="left:318px;top:527px;width:31px;height:1.2px;background:#9d9d9d;"></div><span class="t" style="top:533.63px;font-size:15.5px;color:#f4f4f4;left:333px;transform:translateX(-50%);">12</span><div class="r" style="left:318px;top:552px;width:31px;height:1.2px;background:#9d9d9d;"></div><span class="t" style="top:558.63px;font-size:15.5px;color:#f4f4f4;left:333px;transform:translateX(-50%);">13</span><div class="r" style="left:318px;top:577px;width:31px;height:1.2px;background:#9d9d9d;"></div><span class="t" style="top:583.63px;font-size:15.5px;color:#f4f4f4;left:333px;transform:translateX(-50%);">14</span><div class="r" style="left:318px;top:602px;width:31px;height:1.2px;background:#9d9d9d;"></div><span class="t" style="top:608.63px;font-size:15.5px;color:#f4f4f4;left:333px;transform:translateX(-50%);">15</span><div class="r" style="left:318px;top:627px;width:31px;height:1.2px;background:#9d9d9d;"></div><span class="t" style="top:633.63px;font-size:15.5px;color:#f4f4f4;left:333px;transform:translateX(-50%);">16</span><div class="r" style="left:318px;top:652px;width:31px;height:1.2px;background:#9d9d9d;"></div><span class="t" style="top:658.63px;font-size:15.5px;color:#f4f4f4;left:333px;transform:translateX(-50%);">17</span><div class="r" style="left:318px;top:677px;width:31px;height:1.2px;background:#9d9d9d;"></div><span class="t" style="top:683.63px;font-size:15.5px;color:#f4f4f4;left:333px;transform:translateX(-50%);">18</span><div class="r" style="left:318px;top:702px;width:31px;height:1.2px;background:#9d9d9d;"></div><span class="t" style="top:708.63px;font-size:15.5px;color:#f4f4f4;left:333px;transform:translateX(-50%);">19</span><div class="r" style="left:318px;top:727px;width:31px;height:1.2px;background:#9d9d9d;"></div><span class="t" style="top:733.63px;font-size:15.5px;color:#f4f4f4;left:333px;transform:translateX(-50%);">20</span><div class="r" style="left:318px;top:752px;width:31px;height:1.2px;background:#9d9d9d;"></div><span class="t" style="top:758.63px;font-size:15.5px;color:#f4f4f4;left:333px;transform:translateX(-50%);">21</span><div class="r" style="left:318px;top:777px;width:31px;height:1.2px;background:#9d9d9d;"></div><span class="t" style="top:783.63px;font-size:15.5px;color:#f4f4f4;left:333px;transform:translateX(-50%);">22</span><div class="r" style="left:318px;top:802px;width:31px;height:1.2px;background:#9d9d9d;"></div><div class="r" style="left:348px;top:253px;width:1.2px;height:553px;background:#9d9d9d;"></div><div class="r" style="left:318px;top:803px;width:31px;height:3px;background:#6b6b6b;"></div><div class="r" style="left:349px;top:253px;width:371px;height:24.4px;background:#3daee0;"></div><div class="r" style="left:349px;top:278px;width:160px;height:100px;background:#f2c600;"></div><div class="r" style="left:510px;top:303px;width:210px;height:75px;background:#d2d2d2;"></div><div class="r" style="left:640px;top:278px;width:80px;height:25px;background:#d2d2d2;"></div><div class="r" style="left:349px;top:277px;width:424px;height:1.2px;background:#dcdcdc;"></div><div class="r" style="left:349px;top:302px;width:424px;height:1.2px;background:#dcdcdc;"></div><div class="r" style="left:349px;top:327px;width:424px;height:1.2px;background:#dcdcdc;"></div><div class="r" style="left:349px;top:352px;width:424px;height:1.2px;background:#dcdcdc;"></div><div class="r" style="left:349px;top:377px;width:424px;height:1.2px;background:#dcdcdc;"></div><div class="r" style="left:349px;top:402px;width:424px;height:1.2px;background:#dcdcdc;"></div><div class="r" style="left:349px;top:427px;width:424px;height:1.2px;background:#dcdcdc;"></div><div class="r" style="left:349px;top:452px;width:424px;height:1.2px;background:#dcdcdc;"></div><div class="r" style="left:349px;top:477px;width:424px;height:1.2px;background:#dcdcdc;"></div><div class="r" style="left:349px;top:502px;width:424px;height:1.2px;background:#dcdcdc;"></div><div class="r" style="left:349px;top:527px;width:424px;height:1.2px;background:#dcdcdc;"></div><div class="r" style="left:349px;top:552px;width:424px;height:1.2px;background:#dcdcdc;"></div><div class="r" style="left:349px;top:577px;width:424px;height:1.2px;background:#dcdcdc;"></div><div class="r" style="left:349px;top:602px;width:424px;height:1.2px;background:#dcdcdc;"></div><div class="r" style="left:349px;top:627px;width:424px;height:1.2px;background:#dcdcdc;"></div><div class="r" style="left:349px;top:652px;width:424px;height:1.2px;background:#dcdcdc;"></div><div class="r" style="left:349px;top:677px;width:424px;height:1.2px;background:#dcdcdc;"></div><div class="r" style="left:349px;top:702px;width:424px;height:1.2px;background:#dcdcdc;"></div><div class="r" style="left:349px;top:727px;width:424px;height:1.2px;background:#dcdcdc;"></div><div class="r" style="left:349px;top:752px;width:424px;height:1.2px;background:#dcdcdc;"></div><div class="r" style="left:349px;top:777px;width:424px;height:1.2px;background:#dcdcdc;"></div><div class="r" style="left:349px;top:802px;width:424px;height:1.2px;background:#dcdcdc;"></div><div class="r" style="left:509px;top:253px;width:1.2px;height:553px;background:#dcdcdc;"></div><div class="r" style="left:639px;top:253px;width:1.2px;height:553px;background:#dcdcdc;"></div><div class="r" style="left:719px;top:253px;width:1.2px;height:553px;background:#dcdcdc;"></div><div class="r" style="left:349px;top:277px;width:160px;height:1.2px;background:#d9d3b0;"></div><div class="r" style="left:349px;top:302px;width:160px;height:1.2px;background:#d9d3b0;"></div><div class="r" style="left:349px;top:327px;width:160px;height:1.2px;background:#d9d3b0;"></div><div class="r" style="left:349px;top:352px;width:160px;height:1.2px;background:#d9d3b0;"></div><div class="r" style="left:509px;top:253px;width:1.2px;height:24px;background:#8fc8e4;"></div><div class="r" style="left:639px;top:253px;width:1.2px;height:24px;background:#8fc8e4;"></div><div class="r" style="left:508px;top:275.8px;width:214px;height:102.8px;background:#ffffff;border:2.500px solid #217346;"></div><div class="r" style="left:511.6px;top:304px;width:127.8px;height:72.6px;background:#d2d2d2;"></div><div class="r" style="left:640.4px;top:279.4px;width:77.8px;height:97.2px;background:#d2d2d2;"></div><div class="r" style="left:511.6px;top:327.2px;width:206.6px;height:1.2px;background:#b4b4b4;"></div><div class="r" style="left:511.6px;top:352.2px;width:206.6px;height:1.2px;background:#b4b4b4;"></div><div class="r" style="left:640.4px;top:302.2px;width:77.8px;height:1.2px;background:#b4b4b4;"></div><div class="r" style="left:511.6px;top:302.4px;width:128px;height:1.2px;background:#e4e4e4;"></div><div class="r" style="left:639.2px;top:279.4px;width:1.2px;height:97.2px;background:#b4b4b4;"></div><div class="r" style="left:346.8px;top:277px;width:2.4px;height:101px;background:#217346;"></div><div class="r" style="left:715.6px;top:373.2px;width:7.4px;height:7.8px;background:#217346;border-left:1px solid #fff;border-top:1px solid #fff;"></div><span class="t" style="letter-spacing:-0.065px;top:258.07px;font-size:15px;color:#17384a;left:351px;">Product Category</span><span class="t" style="letter-spacing:-0.106px;top:258.07px;font-size:15px;color:#17384a;left:512px;">Sales</span><span class="t" style="letter-spacing:-0.060px;top:258.07px;font-size:15px;color:#17384a;left:642px;">Margin</span><span class="t" style="letter-spacing:-0.060px;top:283.07px;font-size:15px;color:#33331e;left:351px;">Accessories</span><span class="t" style="transform:scaleX(0.9875);transform-origin:0 50%;top:283.07px;font-size:15px;color:#4c4c4c;left:570.5px;">90,936.28</span><span class="t" style="transform:scaleX(0.9806);transform-origin:0 50%;top:283.07px;font-size:15px;color:#4c4c4c;left:671.4px;">813.64</span><span class="t" style="letter-spacing:-0.138px;top:308.07px;font-size:15px;color:#33331e;left:351px;">Bikes</span><span class="t" style="transform:scaleX(0.9819);transform-origin:0 50%;top:308.07px;font-size:15px;color:#4c4c4c;left:542.1999999999999px;">12,322,030.24</span><span class="t" style="transform:scaleX(0.9710);transform-origin:0 50%;top:308.07px;font-size:15px;color:#4c4c4c;left:659.6999999999999px;">1,008.15</span><span class="t" style="letter-spacing:-0.068px;top:333.07px;font-size:15px;color:#33331e;left:351px;">Clothing</span><span class="t" style="transform:scaleX(0.9717);transform-origin:0 50%;top:333.07px;font-size:15px;color:#4c4c4c;left:565.6px;">111,088.55</span><span class="t" style="transform:scaleX(0.9806);transform-origin:0 50%;top:333.07px;font-size:15px;color:#4c4c4c;left:671.4px;">605.14</span><span class="t" style="letter-spacing:-0.076px;top:358.07px;font-size:15px;color:#33331e;left:351px;">Components</span><span class="t" style="transform:scaleX(0.9843);transform-origin:0 50%;top:358.07px;font-size:15px;color:#4c4c4c;left:562.5px;">809,639.85</span><span class="t" style="transform:scaleX(0.9710);transform-origin:0 50%;top:358.07px;font-size:15px;color:#4c4c4c;left:659.6999999999999px;">1,365.24</span><div class="r" style="left:778px;top:228px;width:18.6px;height:578px;background:#585858;"></div><div class="r" style="left:778.6px;top:229px;width:17px;height:16.4px;background:#9a9a9a;border:1px solid #4a4a4a;"></div><svg class="r" style="left:783px;top:234px;" width="8" height="5" viewBox="0 0 8 5"><path d="M0 4.600L4 .400L8 4.600Z" fill="#7d7d7d"/></svg><div class="r" style="left:778.6px;top:247.6px;width:17px;height:58.4px;background:#9a9a9a;border:1px solid #4a4a4a;"></div><div class="r" style="left:778.6px;top:787.4px;width:17px;height:18px;background:#9a9a9a;border:1px solid #4a4a4a;"></div><svg class="r" style="left:783px;top:794px;" width="8" height="5" viewBox="0 0 8 5"><path d="M0 .400H8L4 4.600Z" fill="#7d7d7d"/></svg><div class="r" style="left:318px;top:814px;width:455px;height:19px;background:#585858;"></div><div class="r" style="left:318.6px;top:814.6px;width:17px;height:17.6px;background:#9a9a9a;border:1px solid #4a4a4a;"></div><svg class="r" style="left:324.4px;top:819px;" width="5" height="9" viewBox="0 0 5 9"><path d="M4.600 0V9L.400 4.500Z" fill="#7d7d7d"/></svg><div class="r" style="left:337.4px;top:814.6px;width:51.4px;height:17.6px;background:#9a9a9a;border:1px solid #4a4a4a;"></div><div class="r" style="left:755.6px;top:814.6px;width:17px;height:17.6px;background:#9a9a9a;border:1px solid #4a4a4a;"></div><svg class="r" style="left:762px;top:819px;" width="5" height="9" viewBox="0 0 5 9"><path d="M.400 0V9L4.600 4.500Z" fill="#7d7d7d"/></svg><div class="r" style="left:800px;top:228px;width:1px;height:614px;background:#f4f4f4;"></div>
<!-- chart -->
<div class="r" style="left:804px;top:193px;width:657px;height:648px;background:#ffffff;border:3px solid #4da3f2;"></div><svg class="r" style="left:0px;top:0px;" width="1920" height="893" viewBox="0 0 1920 893"><rect x="930" y="219" width="320.500" height="596.5" fill="#f4fcff"/><path d="M933 218.600H1250" stroke="#dcdcdc" stroke-width="1"/><path d="M933 729.1H1250.600" stroke="#d9e0e3" stroke-width="1.100"/><path d="M933 643.7H1250.600" stroke="#d9e0e3" stroke-width="1.100"/><path d="M933 558.3H1250.600" stroke="#d9e0e3" stroke-width="1.100"/><path d="M933 472.9H1250.600" stroke="#d9e0e3" stroke-width="1.100"/><path d="M933 387.5H1250.600" stroke="#d9e0e3" stroke-width="1.100"/><path d="M933 302.1H1250.600" stroke="#d9e0e3" stroke-width="1.100"/><path d="M1013.3 220V814.5" stroke="#d9e0e3" stroke-width="1.100"/><path d="M1092.4 220V814.5" stroke="#d9e0e3" stroke-width="1.100"/><path d="M1171.5 220V814.5" stroke="#d9e0e3" stroke-width="1.100"/><path d="M932 219V815.5" stroke="#c3c9cc" stroke-width="2"/><path d="M931 814.3H1250" stroke="#e2e8ea" stroke-width="1.200"/><path d="M931 815.6H1250" stroke="#c6cdd0" stroke-width="1.500"/><path d="M1254.500 219V815.600" stroke="#c8c8c8" stroke-width="1"/><g fill="none" stroke="#38d0fa" stroke-width="2" stroke-dasharray="6 4"><path d="M928 219H1252"/><path d="M1251 215V821"/><path d="M1252 820H928"/><path d="M929 238V821"/></g><path d="M929 218V234" stroke="#38d0fa" stroke-width="2"/><polyline points="974,810.6 1053,288.3 1132,809.8 1211,779.9" fill="none" stroke="#2ea3da" stroke-width="4.400" stroke-dasharray="2 4.200" stroke-linejoin="miter"/><polygon points="974.00,505.26 975.59,509.48 980.09,509.69 976.57,512.50 977.76,516.84 974.00,514.36 970.24,516.84 971.43,512.50 967.91,509.69 972.41,509.48" fill="#fffdf0" stroke="#eec230" stroke-width="1.300" stroke-linejoin="round"/><polygon points="1053.00,432.75 1054.59,436.96 1059.09,437.17 1055.57,439.98 1056.76,444.33 1053.00,441.85 1049.24,444.33 1050.43,439.98 1046.91,437.17 1051.41,436.96" fill="#fffdf0" stroke="#eec230" stroke-width="1.300" stroke-linejoin="round"/><polygon points="1132.00,583.00 1133.59,587.21 1138.09,587.42 1134.57,590.23 1135.76,594.57 1132.00,592.10 1128.24,594.57 1129.43,590.23 1125.91,587.42 1130.41,587.21" fill="#fffdf0" stroke="#eec230" stroke-width="1.300" stroke-linejoin="round"/><polygon points="1211.00,299.62 1212.59,303.84 1217.09,304.04 1213.57,306.86 1214.76,311.20 1211.00,308.72 1207.24,311.20 1208.43,306.86 1204.91,304.04 1209.41,303.84" fill="#fffdf0" stroke="#eec230" stroke-width="1.300" stroke-linejoin="round"/><path d="M1228.700 321H1308V307.500L1385 334L1308 360.500V347H1228.700Z" fill="#00a2e8"/></svg><span class="t" style="letter-spacing:-0.209px;top:197.23px;font-size:20.4px;color:#14145e;left:808.6px;">Custom Title By Me</span><span class="t" style="letter-spacing:-0.021px;top:218.74px;font-size:12.2px;color:#808080;left:808.5px;">Column 0</span><span class="t" style="top:803.04px;font-size:12.4px;color:#7d7d7d;right:990.8px;">.00</span><span class="t" style="top:722.74px;font-size:12.4px;color:#7d7d7d;right:990.8px;">2.00M</span><span class="t" style="top:637.34px;font-size:12.4px;color:#7d7d7d;right:990.8px;">4.00M</span><span class="t" style="top:551.94px;font-size:12.4px;color:#7d7d7d;right:990.8px;">6.00M</span><span class="t" style="top:466.54px;font-size:12.4px;color:#7d7d7d;right:990.8px;">8.00M</span><span class="t" style="top:381.14px;font-size:12.4px;color:#7d7d7d;right:990.8px;">10.00M</span><span class="t" style="top:295.74px;font-size:12.4px;color:#7d7d7d;right:990.8px;">12.00M</span><span class="t" style="top:218.54px;font-size:12.4px;color:#7d7d7d;right:990.8px;">14.00M</span><span class="t" style="top:803.04px;font-size:12.4px;color:#7d7d7d;left:1258px;">.00</span><span class="t" style="top:732.08px;font-size:12.4px;color:#7d7d7d;left:1258px;">200.00</span><span class="t" style="top:657.52px;font-size:12.4px;color:#7d7d7d;left:1258px;">400.00</span><span class="t" style="top:582.96px;font-size:12.4px;color:#7d7d7d;left:1258px;">600.00</span><span class="t" style="top:508.39px;font-size:12.4px;color:#7d7d7d;left:1258px;">800.00</span><span class="t" style="top:433.83px;font-size:12.4px;color:#7d7d7d;left:1258px;">1.00K</span><span class="t" style="top:359.27px;font-size:12.4px;color:#7d7d7d;left:1258px;">1.20K</span><span class="t" style="top:284.71px;font-size:12.4px;color:#7d7d7d;left:1258px;">1.40K</span><span class="t" style="top:218.34px;font-size:12.4px;color:#7d7d7d;left:1258px;">1.60K</span><span class="t" style="top:823.64px;font-size:12.4px;color:#7d7d7d;left:974px;transform:translateX(-50%);">Member 0</span><span class="t" style="top:823.64px;font-size:12.4px;color:#7d7d7d;left:1053px;transform:translateX(-50%);">Member 1</span><span class="t" style="top:823.64px;font-size:12.4px;color:#7d7d7d;left:1132px;transform:translateX(-50%);">Member 2</span><span class="t" style="top:823.64px;font-size:12.4px;color:#7d7d7d;left:1211px;transform:translateX(-50%);">Member 3</span><span class="t" style="letter-spacing:0.021px;top:197.16px;font-size:14px;color:#737373;left:1320px;font-weight:bold;">Values</span><div class="r" style="left:1323px;top:222px;width:10.6px;height:10.6px;background:#3daadf;"></div><div class="r" style="left:1323px;top:239.3px;width:10.6px;height:11.5px;background:#f2c400;"></div><span class="t" style="letter-spacing:-0.278px;top:220.23px;font-size:15.5px;color:#6e6e6e;left:1338px;">Column 0 [Y1]</span><span class="t" style="letter-spacing:-0.278px;top:238.43px;font-size:15.5px;color:#6e6e6e;left:1338px;">Column 1 [Y2]</span>
<!-- right -->
<div class="r" style="left:1464px;top:117px;width:456px;height:37px;background:#474747;"></div><span class="t" style="letter-spacing:0.113px;top:127.67px;font-size:15px;color:#dedede;left:1474.6px;-webkit-text-stroke:.45px;">Drop Zones</span><span class="t" style="top:127.05px;font-size:17.5px;color:#dedede;left:1868.2px;font-weight:bold;">?</span><svg class="r" style="left:1897px;top:129px;" width="9" height="14" viewBox="0 0 9 14"><path d="M1 .600L7.800 7L1 13.400" fill="none" stroke="#d4d4d4" stroke-width="1.400"/></svg><div class="r" style="left:1464px;top:155px;width:456px;height:140px;background:#474747;"></div><div class="r" style="left:1478px;top:169px;width:429.4px;height:111.4px;background:#555555;border:1px solid #222;"></div><div class="r" style="left:1910px;top:171px;width:8px;height:38px;background:#6b6b6b;"></div><svg class="r" style="left:1487px;top:178.6px;" width="16" height="14" viewBox="0 0 16 14"><path d="M.700 5.200H15.300V13.300H.700ZM4.400 5.200V2.400H11.600V5.200M6.600 2.400V.600H9.400V2.400" fill="none" stroke="#5b9fd3" stroke-width="1.200"/></svg><span class="t" style="letter-spacing:-0.005px;top:179.27px;font-size:15px;color:#dedede;left:1517.6px;-webkit-text-stroke:.45px;">Categories</span><div class="r" style="left:1487.4px;top:208px;width:411.4px;height:30px;background:#3670a6;border:1px solid #2b5c8c;border-radius:5px;"></div><svg class="r" style="left:1495.4px;top:218.6px;" width="9" height="14" viewBox="0 0 9 14"><rect x="0" y="0" width="3.600" height="3.600" fill="#fff"/><rect x="0" y="4.8" width="3.600" height="3.600" fill="#fff"/><rect x="0" y="9.6" width="3.600" height="3.600" fill="#fff"/><rect x="5" y="0" width="3.600" height="3.600" fill="#fff"/><rect x="5" y="4.8" width="3.600" height="3.600" fill="#fff"/><rect x="5" y="9.6" width="3.600" height="3.600" fill="#fff"/></svg><span class="t" style="letter-spacing:-0.504px;top:215.67px;font-size:15px;color:#ffffff;left:1516.4px;">Series 2</span><div class="r" style="left:1464px;top:299px;width:456px;height:37px;background:#474747;"></div><span class="t" style="letter-spacing:0.110px;top:309.67px;font-size:15px;color:#dedede;left:1474.6px;-webkit-text-stroke:.45px;">Formatting Panel</span><span class="t" style="top:309.05px;font-size:17.5px;color:#dedede;left:1868.2px;font-weight:bold;">?</span><svg class="r" style="left:1897px;top:311px;" width="9" height="14" viewBox="0 0 9 14"><path d="M1 .600L7.800 7L1 13.400" fill="none" stroke="#d4d4d4" stroke-width="1.400"/></svg><div class="r" style="left:1464px;top:337px;width:456px;height:112.5px;background:#474747;"></div><div class="r" style="left:1475px;top:355px;width:17.4px;height:18px;background:#6a6a6a;border:1px solid #3a3a3a;"></div><svg class="r" style="left:1477.6px;top:358.4px;" width="12" height="11" viewBox="0 0 12 11"><path d="M1.200 5.600L4.400 9L11 1.400" fill="none" stroke="#2e2e2e" stroke-width="2.300"/></svg><div class="r" style="left:1498.2px;top:348.4px;width:348.4px;height:31px;background:#ffffff;"></div><span class="t" style="letter-spacing:-0.097px;top:357.27px;font-size:15px;color:#1e1e1e;left:1511.8px;">Plot Area</span><svg class="r" style="left:1820.6px;top:361.4px;" width="12.400000000000091" height="6.2000000000000455" viewBox="0 0 12.400000000000091 6.2000000000000455"><path d="M0 0H12.400000000000091L6.2000000000000455 6.2000000000000455Z" fill="#8a8a8a"/></svg><svg class="r" style="left:1885px;top:355px;" width="16" height="16" viewBox="0 0 16 16"><path d="M2.200 4.600A6.400 6.400 0 1 1 1.600 9.600" fill="none" stroke="#d4d4d4" stroke-width="1.400"/><path d="M.800 1.200V5.600H5.200" fill="none" stroke="#d4d4d4" stroke-width="1.400"/></svg><div class="r" style="left:1557px;top:405px;width:35px;height:35px;background:#323232;"></div><svg class="r" style="left:1481.6px;top:414px;" width="20" height="20" viewBox="0 0 20 20"><rect x="2" y="2" width="16" height="16" fill="none" stroke="#c4c4c4" stroke-width="1.300"/><rect x="4.600" y="4.600" width="10.800" height="10.800" fill="#a9a9a9"/><g fill="#c4c4c4"><rect x="0" y="0" width="3" height="3"/><rect x="17" y="0" width="3" height="3"/><rect x="0" y="17" width="3" height="3"/><rect x="17" y="17" width="3" height="3"/></g></svg><svg class="r" style="left:1523px;top:414px;" width="21" height="21" viewBox="0 0 21 21"><path d="M.700 19.800V.700H19.800" fill="none" stroke="#c4c4c4" stroke-width="1.300"/><path d="M19.800 .700V19.800H.700" fill="none" stroke="#c4c4c4" stroke-width="1.300" stroke-dasharray="2.200 1.800"/></svg><svg class="r" style="left:1564px;top:413px;" width="22" height="22" viewBox="0 0 22 22"><g stroke="#4a9bd6" fill="none"><path d="M1.600 .800V20.400M0 19.400H8.600" stroke-width="1.500"/><path d="M6.200 1.600V17.600M9.500 1.600V17.600" stroke-width="1.300"/><path d="M13 2.600V8.400M17 2.600V8.400" stroke-width="1.300" stroke-dasharray="2.300 1.200"/><path d="M12.400 12.200L19.800 20.200M19.800 12.200L12.400 20.200" stroke-width="1.600"/></g></svg><svg class="r" style="left:1605.6px;top:413px;" width="22" height="22" viewBox="0 0 22 22"><g stroke="#c4c4c4" fill="none" stroke-width="1.200"><path d="M2 .800V20.400M.400 19.400H4.600"/><path d="M2 3.900H20.400M2 7.600H20.400" stroke-width="1.300"/><path d="M3.600 12H10.600M3.600 15.700H10.600M3.600 19.400H10.600" stroke="#a8a8a8"/></g></svg><span class="t" style="top:422.12px;font-size:14.5px;color:#c4c4c4;left:1618.4px;">y</span><svg class="r" style="left:1565.4px;top:441.5px;" width="15" height="8.2" viewBox="0 0 15 8.2"><path d="M0 8.200L7.500 0L15 8.200Z" fill="#555555"/></svg><div class="r" style="left:1464px;top:449.5px;width:456px;height:393.5px;background:#555555;"></div><div class="r" style="left:1475.4px;top:465.4px;width:17px;height:17px;background:#f0f0f0;border:1.500px solid #1e1e1e;"></div><span class="t" style="letter-spacing:0.087px;top:466.92px;font-size:14.5px;color:#c6c6c6;left:1503.2px;">Show Major Grid Lines</span><span class="t" style="letter-spacing:0.248px;top:511.72px;font-size:14.5px;color:#c6c6c6;left:1474.4px;">Line Width</span><div class="r" style="left:1792.2px;top:501px;width:117.8px;height:34.8px;background:#424242;"></div><div class="r" style="left:1795.4px;top:506.3px;width:86.6px;height:27px;background:#ffffff;border:1.200px solid #2a2a2a;"></div><span class="t" style="letter-spacing:-0.156px;top:513.16px;font-size:14px;color:#b4b4b4;left:1801.6px;">0.5</span><svg class="r" style="left:1891.2px;top:509.7px;" width="9.6" height="4.6" viewBox="0 0 9.6 4.6"><path d="M0 4.600L4.800 0L9.600 4.600Z" fill="#7a7a7a"/></svg><svg class="r" style="left:1891.2px;top:522px;" width="9.6" height="4.6" viewBox="0 0 9.6 4.6"><path d="M0 0H9.600L4.800 4.600Z" fill="#7a7a7a"/></svg><span class="t" style="letter-spacing:0.091px;top:554.72px;font-size:14.5px;color:#c6c6c6;left:1474.4px;">Line Color</span><div class="r" style="left:1846px;top:543.2px;width:64px;height:31.4px;background:#4c4c4c;"></div><svg class="r" style="left:1856px;top:549px;" width="22" height="20" viewBox="0 0 22 20"><path d="M14.600 .800L18 4.200L8.400 13.800L4.400 14.600L5.200 10.600Z" fill="none" stroke="#5c5c5c" stroke-width="1.200"/><path d="M1 2H10M1 2V14" fill="none" stroke="#5a5a5a" stroke-width="1"/><rect x="0" y="16.400" width="19" height="3.600" fill="#5c5c5c"/></svg><svg class="r" style="left:1888px;top:556.6px;" width="9" height="5" viewBox="0 0 9 5"><path d="M0 0H9L4.500 5Z" fill="#606060"/></svg><span class="t" style="letter-spacing:-0.119px;top:595.72px;font-size:14.5px;color:#c6c6c6;left:1474.4px;">Line Style</span><div class="r" style="left:1573.8px;top:586.8px;width:336.2px;height:30.2px;background:#ffffff;"></div><div class="r" style="left:1588px;top:602.2px;width:17.4px;height:1.8px;background:#bcd6ea;"></div><span class="t" style="letter-spacing:-0.019px;top:595.72px;font-size:14.5px;color:#b0b0b0;left:1619.6px;">Solid Line</span><svg class="r" style="left:1884.6px;top:599.4px;" width="12.0" height="6.0" viewBox="0 0 12.0 6.0"><path d="M0 0H12.0L6.0 6.0Z" fill="#c8c8c8"/></svg><div class="r" style="left:1474.4px;top:625.2px;width:435.6px;height:1.2px;background:#3c3c3c;"></div><span class="t" style="letter-spacing:0.113px;top:647.52px;font-size:14.5px;color:#c6c6c6;left:1474.4px;">Position</span><div class="r" style="left:1691.8px;top:638.8px;width:218.2px;height:29.9px;background:#ffffff;"></div><svg class="r" style="left:1705.6px;top:646px;" width="21" height="18" viewBox="0 0 21 18"><rect x="1.600" y="1.600" width="6.400" height="13.600" fill="#dcdcdc"/><rect x="11.400" y="1.600" width="6.400" height="13.600" fill="#dcdcdc"/><path d="M.400 0V17.400M9.700 1V15.600M0 16.800H20" stroke="#e2e2e2" stroke-width="1"/></svg><span class="t" style="letter-spacing:0.464px;top:647.52px;font-size:14.5px;color:#b0b0b0;left:1737.6px;">Middle</span><svg class="r" style="left:1884.6px;top:651.4px;" width="12.0" height="6.0" viewBox="0 0 12.0 6.0"><path d="M0 0H12.0L6.0 6.0Z" fill="#c8c8c8"/></svg><div class="r" style="left:1474.4px;top:677px;width:435.6px;height:1.2px;background:#3c3c3c;"></div><div class="r" style="left:1475.4px;top:697.4px;width:17px;height:17px;background:#ffffff;border:1.500px solid #1e1e1e;"></div><svg class="r" style="left:1478.2px;top:700.6px;" width="12" height="11" viewBox="0 0 12 11"><path d="M1.200 5.400L4.400 9L10.800 1.400" fill="none" stroke="#1a1a1a" stroke-width="2"/></svg><span class="t" style="letter-spacing:0.135px;top:698.92px;font-size:14.5px;color:#c6c6c6;left:1503.2px;">Show Minor Grid Lines</span><span class="t" style="letter-spacing:0.248px;top:743.72px;font-size:14.5px;color:#c6c6c6;left:1474.4px;">Line Width</span><div class="r" style="left:1792.2px;top:733px;width:117.8px;height:34.8px;background:#424242;"></div><div class="r" style="left:1795.4px;top:738.3px;width:86.6px;height:27px;background:#ffffff;border:1.200px solid #2a2a2a;"></div><span class="t" style="letter-spacing:-0.156px;top:745.16px;font-size:14px;color:#1e1e1e;left:1801.6px;">0.5</span><svg class="r" style="left:1891.2px;top:741.7px;" width="9.6" height="4.6" viewBox="0 0 9.6 4.6"><path d="M0 4.600L4.800 0L9.600 4.600Z" fill="#e8e8e8"/></svg><svg class="r" style="left:1891.2px;top:754px;" width="9.6" height="4.6" viewBox="0 0 9.6 4.6"><path d="M0 0H9.600L4.800 4.600Z" fill="#e8e8e8"/></svg><span class="t" style="letter-spacing:0.091px;top:786.72px;font-size:14.5px;color:#c6c6c6;left:1474.4px;">Line Color</span><div class="r" style="left:1846px;top:775.2px;width:64px;height:31.4px;background:#4c4c4c;"></div><svg class="r" style="left:1856px;top:781px;" width="22" height="20" viewBox="0 0 22 20"><path d="M14.600 .800L18 4.200L8.400 13.800L4.400 14.600L5.200 10.600Z" fill="none" stroke="#5c5c5c" stroke-width="1.200"/><path d="M1 2H10M1 2V14" fill="none" stroke="#5a5a5a" stroke-width="1"/><rect x="0" y="16.400" width="19" height="3.600" fill="#5c5c5c"/></svg><svg class="r" style="left:1888px;top:788.6px;" width="9" height="5" viewBox="0 0 9 5"><path d="M0 0H9L4.500 5Z" fill="#606060"/></svg><span class="t" style="letter-spacing:-0.119px;top:827.72px;font-size:14.5px;color:#c6c6c6;left:1474.4px;">Line Style</span><div class="r" style="left:1573.8px;top:818.8px;width:336.2px;height:30.2px;background:#ffffff;"></div><div class="r" style="left:1588px;top:834.2px;width:17.4px;height:1.8px;background:#4a8fc4;"></div><span class="t" style="letter-spacing:-0.019px;top:827.72px;font-size:14.5px;color:#1e1e1e;left:1619.6px;">Solid Line</span><svg class="r" style="left:1884.6px;top:831.4px;" width="12.0" height="6.0" viewBox="0 0 12.0 6.0"><path d="M0 0H12.0L6.0 6.0Z" fill="#8a8a8a"/></svg><div class="r" style="left:1461px;top:843px;width:459px;height:50px;background:#262626;"></div><div class="r" style="left:1452px;top:287px;width:468px;height:564px;background:transparent;border:5.200px solid #00a2e8;"></div><div class="r" style="left:1464px;top:294.4px;width:450.8px;height:4.6px;background:#222222;"></div>
<!-- bottom -->
<div class="r" style="left:0px;top:851px;width:1452px;height:42px;background:#262626;"></div><div class="r" style="left:0px;top:842px;width:1452px;height:5px;background:#262626;"></div><svg class="r" style="left:0px;top:0px;" width="1920" height="893" viewBox="0 0 1920 893"><path d="M0 848.950H328.300L329.700 850.400V886.400H524.700V850.400L526.200 848.950H1452" fill="none" stroke="#3dbdb0" stroke-width="3.200" stroke-linejoin="round"/></svg><div class="r" style="left:17.3px;top:864.9px;width:16.6px;height:2.2px;background:#e0e0e0;"></div><div class="r" style="left:17.3px;top:870px;width:16.6px;height:2.2px;background:#e0e0e0;"></div><div class="r" style="left:17.3px;top:875.0px;width:16.6px;height:2.2px;background:#e0e0e0;"></div><svg class="r" style="left:58px;top:860px;" width="24" height="22" viewBox="0 0 24 22"><path d="M1 .800H9.400L11.600 4H1Z" fill="#d4d4d4"/><path d="M1 5.400H19.800V10H14L10 17.400H1Z" fill="#d4d4d4"/><circle cx="14.800" cy="13.400" r="6.600" fill="#262626"/><circle cx="14.800" cy="13.400" r="5.100" fill="none" stroke="#d4d4d4" stroke-width="1.300"/><path d="M11 17.400L8.400 20.400" stroke="#d4d4d4" stroke-width="1.700"/></svg><svg class="r" style="left:95.5px;top:861px;" width="22" height="20" viewBox="0 0 22 20"><path d="M1.200 1.800H11L7.400 6.600V11.800H4.800V6.600Z" fill="none" stroke="#d4d4d4" stroke-width="1.300" stroke-linejoin="round"/><path d="M14.400 1.800H19.800V14.400H7.200V18.400H1.200V9" fill="none" stroke="#d4d4d4" stroke-width="1.300"/><rect x="9.600" y="16" width="4.600" height="2.800" fill="#d4d4d4"/><rect x="15.600" y="16" width="5" height="2.800" fill="#d4d4d4"/></svg><div class="r" style="left:125px;top:854px;width:199px;height:30px;background:#3f4248;"></div><div class="r" style="left:125px;top:884px;width:199px;height:3px;background:#4cb81d;"></div><svg class="r" style="left:144.7px;top:859.6px;" width="15" height="14" viewBox="0 0 15 14"><rect x="0" y="2" width="3.400" height="12" fill="#4cb81d"/><rect x="5.400" y="5.600" width="3.400" height="8.400" fill="#4cb81d"/><rect x="10.800" y="0" width="3.400" height="14" fill="#4cb81d"/></svg><span class="t" style="letter-spacing:-0.321px;top:859.47px;font-size:15px;color:#a9a9a9;left:165px;">ExampleForTabulate</span><span class="t" style="top:856.52px;font-size:19px;color:#ffffff;left:339.2px;font-weight:bold;">*</span><svg class="r" style="left:350.7px;top:862px;" width="14" height="14" viewBox="0 0 14 14"><path d="M0 0L14 14H0Z M3 7.400V11.200H6.800Z" fill="#3cbfae" fill-rule="evenodd"/><g fill="#3cbfae"><rect x="5.600" y="1.400" width="2.800" height="1.600"/><rect x="9.200" y="1.400" width="4.200" height="1.600"/><rect x="8.200" y="4" width="5.200" height="1.600"/><rect x="10.400" y="6.600" width="3" height="1.600"/><rect x="12" y="9.200" width="1.400" height="1.800"/></g></svg><span class="t" style="letter-spacing:0.082px;top:861.27px;font-size:15px;color:#ffffff;left:371.5px;font-weight:bold;">ExampleTabulate</span><svg class="r" style="left:504px;top:864.6px;" width="12.600000000000023" height="6.7999999999999545" viewBox="0 0 12.600000000000023 6.7999999999999545"><path d="M0 0H12.600000000000023L6.300000000000011 6.7999999999999545Z" fill="#ffffff"/></svg><svg class="r" style="left:543px;top:863.2px;" width="15.6" height="15.6" viewBox="0 0 15.6 15.6"><path d="M7.800 0V15.600M0 7.800H15.600" stroke="#e2e2e2" stroke-width="2"/></svg><svg class="r" style="left:0px;top:0px;" width="1920" height="893" viewBox="0 0 1920 893"><g transform="translate(1842.100 865.100) rotate(-45)" fill="#dcdcdc"><ellipse cx="0" cy="0" rx="5.200" ry="2.200"/><path d="M-4 2.400C-2 3.600 2 3.600 4 2.400L4.600 7.800C2 9.400 -2 9.400 -4.600 7.800Z"/><path d="M-6.800 7.400C-4 12 4 12 6.800 7.400" fill="none" stroke="#dcdcdc" stroke-width="1.500"/><path d="M-2 11.800H2L0 21.600Z"/></g></svg><svg class="r" style="left:1868.8px;top:867.8px;" width="8.200000000000045" height="6.400000000000091" viewBox="0 0 8.200000000000045 6.400000000000091"><path d="M0 0H8.200000000000045L4.100000000000023 6.400000000000091Z" fill="#dcdcdc"/></svg><svg class="r" style="left:0px;top:0px;" width="1920" height="893" viewBox="0 0 1920 893"><path d="M1899.70 864.60L1897.65 864.96L1895.75 865.72L1894.07 866.85L1892.68 868.28L1891.65 869.95L1890.99 871.77L1890.73 873.66L1890.87 875.53L1891.39 877.30L1892.25 878.90L1893.41 880.26L1894.81 881.33L1896.37 882.07L1898.03 882.46L1899.70 882.50L1901.31 882.19L1902.80 881.56L1904.10 880.65L1905.15 879.51L1905.94 878.20L1906.41 876.78L1906.58 875.32L1906.44 873.89L1906.02 872.55L1905.33 871.35L1904.43 870.34L1903.36 869.57L1902.17 869.05L1900.93 868.79L1899.70 868.80L1898.52 869.06L1897.45 869.56L1896.54 870.25L1895.81 871.09L1895.28 872.05L1894.98 873.07L1894.91 874.10L1895.05 875.09L1895.38 876.00L1895.89 876.80L1896.53 877.45L1897.28 877.93L1898.08 878.24L1898.90 878.36L1899.70 878.30L1900.44 878.08L1901.09 877.72L1901.63 877.25L1902.03 876.70L1902.30 876.10L1902.42 875.48L1902.41 874.88L1902.27 874.33L1902.02 873.85L1901.69 873.45L1901.31 873.15L1900.89 872.97L1900.46 872.88L1900.06 872.90L1899.70 873.00" fill="none" stroke="#dcdcdc" stroke-width="2.300" stroke-linecap="round"/></svg><div class="r" style="left:105px;top:117px;width:50px;height:2px;background:transparent;background-image:repeating-linear-gradient(90deg,#d0d0d0 0 1px,transparent 1px 2px);opacity:.8;"></div><div class="r" style="left:105px;top:402px;width:50px;height:2px;background:transparent;background-image:repeating-linear-gradient(90deg,#d0d0d0 0 1px,transparent 1px 2px);opacity:.8;"></div><div class="r" style="left:1667px;top:117px;width:50px;height:2px;background:transparent;background-image:repeating-linear-gradient(90deg,#d0d0d0 0 1px,transparent 1px 2px);opacity:.8;"></div><div class="r" style="left:1667px;top:299px;width:50px;height:2px;background:transparent;background-image:repeating-linear-gradient(90deg,#d0d0d0 0 1px,transparent 1px 2px);opacity:.8;"></div><div class="r" style="left:1098px;top:193px;width:50px;height:2px;background:transparent;background-image:repeating-linear-gradient(90deg,#d0d0d0 0 1px,transparent 1px 2px);opacity:.8;"></div><div class="r" style="left:524px;top:194px;width:50px;height:2px;background:transparent;background-image:repeating-linear-gradient(90deg,#d0d0d0 0 1px,transparent 1px 2px);opacity:.8;"></div><div class="r" style="left:258px;top:189px;width:65px;height:64.8px;background:transparent;border:5px solid #ed1c24;"></div></body></html>
